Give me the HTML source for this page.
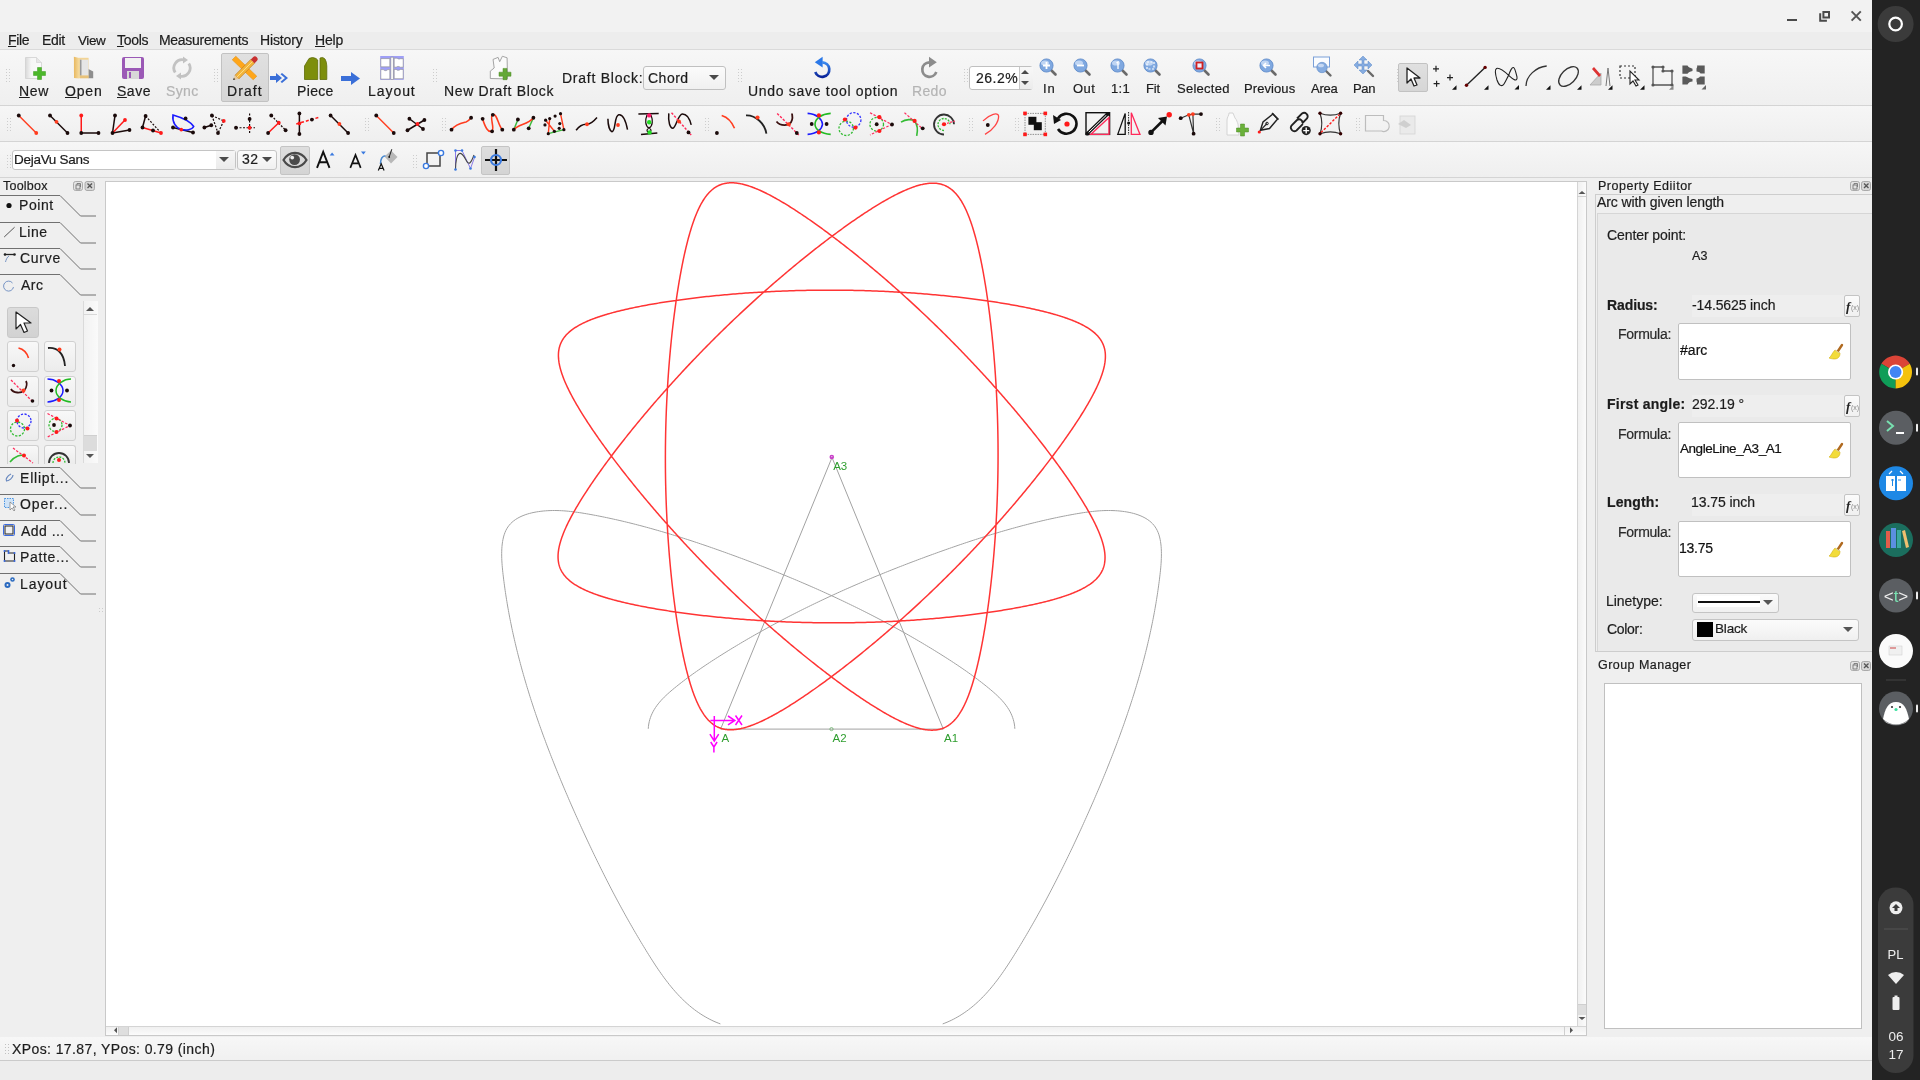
<!DOCTYPE html><html><head><meta charset="utf-8"><style>html,body{margin:0;padding:0}body{width:1920px;height:1080px;overflow:hidden;position:relative;background:#efefef;font-family:"Liberation Sans",sans-serif;-webkit-text-stroke:0.2px currentColor}div{will-change:transform}</style></head><body>
<div style="position:absolute;left:0px;top:0px;width:1872px;height:32px;background:#f2f2f2"></div>
<div style="position:absolute;left:0px;top:32px;width:1872px;height:17px;background:#ededed"></div>
<div style="position:absolute;left:1872px;top:0px;width:48px;height:1080px;background:#232323"></div>
<svg style="position:absolute;left:1770px;top:0px;overflow:visible" width="100" height="36" viewBox="0 0 100 36"><path d="M17 20h10" stroke="#4a4a4a" stroke-width="2"/><path d="M53.4 11.9h5.6v5.6h-5.6z" fill="none" stroke="#4a4a4a" stroke-width="2"/><path d="M50.2 13.3v7.4h6.7" fill="none" stroke="#4a4a4a" stroke-width="2"/><path d="M81.6 11.4l9.2 9.2M90.8 11.4l-9.2 9.2" stroke="#555" stroke-width="2"/></svg>
<div style="position:absolute;left:7.97px;top:33.15px;font-size:14px;line-height:14px;color:#1c1c1c;font-weight:normal;letter-spacing:-0.358px;white-space:nowrap;"><u>F</u>ile</div>
<div style="position:absolute;left:41.58px;top:33.15px;font-size:14px;line-height:14px;color:#1c1c1c;font-weight:normal;letter-spacing:-0.300px;white-space:nowrap;">Edit</div>
<div style="position:absolute;left:78.00px;top:33.57px;font-size:13.5px;line-height:13.5px;color:#1c1c1c;font-weight:normal;letter-spacing:-0.433px;white-space:nowrap;">View</div>
<div style="position:absolute;left:117.15px;top:33.15px;font-size:14px;line-height:14px;color:#1c1c1c;font-weight:normal;letter-spacing:-0.275px;white-space:nowrap;"><u>T</u>ools</div>
<div style="position:absolute;left:159.28px;top:33.15px;font-size:14px;line-height:14px;color:#1c1c1c;font-weight:normal;letter-spacing:-0.291px;white-space:nowrap;">Measurements</div>
<div style="position:absolute;left:260.18px;top:33.15px;font-size:14px;line-height:14px;color:#1c1c1c;font-weight:normal;letter-spacing:-0.133px;white-space:nowrap;">History</div>
<div style="position:absolute;left:315.38px;top:33.15px;font-size:14px;line-height:14px;color:#1c1c1c;font-weight:normal;letter-spacing:-0.208px;white-space:nowrap;"><u>H</u>elp</div>
<div style="position:absolute;left:0px;top:49px;width:1872px;height:1px;background:#dadada"></div>
<div style="position:absolute;left:0px;top:50px;width:1872px;height:56px;background:linear-gradient(#f7f7f7,#efefef)"></div>
<div style="position:absolute;left:0px;top:105px;width:1872px;height:1px;background:#d4d4d4"></div>
<div style="position:absolute;left:0px;top:106px;width:1872px;height:35px;background:linear-gradient(#f6f6f6,#efefef)"></div>
<div style="position:absolute;left:0px;top:141px;width:1872px;height:1px;background:#d4d4d4"></div>
<div style="position:absolute;left:0px;top:142px;width:1872px;height:35px;background:linear-gradient(#f6f6f6,#efefef)"></div>
<div style="position:absolute;left:0px;top:177px;width:1872px;height:1px;background:#d4d4d4"></div>
<div style="position:absolute;left:5px;top:68px;width:6px;height:16px;background-image:radial-gradient(#cdcdcd 0.75px,transparent 0.9px);background-size:3px 3px"></div>
<svg style="position:absolute;left:22px;top:56px;overflow:visible" width="24" height="24" viewBox="0 0 24 24"><defs><linearGradient id="pg" x1="0" x2="1"><stop offset="0" stop-color="#d8d8d8"/><stop offset="0.35" stop-color="#f6f6f6"/><stop offset="1" stop-color="#fafafa"/></linearGradient></defs><path d="M3.5 1.5h11l5 5v16h-16z" fill="url(#pg)" stroke="#d0d0d0" stroke-width="0.8"/><path d="M14.5 1.5v5h5" fill="#e6e6e6" stroke="#cfcfcf" stroke-width="0.6"/><path d="M15.5 11.5h4v4h4v4h-4v4h-4v-4h-4v-4h4z" fill="#4cb82a" stroke="#3a9a1c" stroke-width="0.5"/></svg>
<div style="position:absolute;left:19.27px;top:84.15px;font-size:14px;line-height:14px;color:#1c1c1c;font-weight:normal;letter-spacing:0.613px;white-space:nowrap;"><u>N</u>ew</div>
<svg style="position:absolute;left:71px;top:56px;overflow:visible" width="24" height="24" viewBox="0 0 24 24"><defs><linearGradient id="fo" x1="0" x2="1"><stop offset="0" stop-color="#e8b860"/><stop offset="1" stop-color="#f6dca0"/></linearGradient></defs><path d="M8 1.8h9.6v20.4H8z" fill="#f2d496"/><path d="M17.4 13l4.8 2.6v6.6h-4.8z" fill="#8e8e8e"/><rect x="8.9" y="3.7" width="8.5" height="16" fill="#e6e6e6"/><rect x="8.9" y="3.7" width="1.6" height="16" fill="#9a9a9a"/><path d="M9 19.5h8.6v2.7H9z" fill="#e8c27a"/><path d="M2.9 0.7L8.3 2v20.5L3 22z" fill="url(#fo)"/></svg>
<div style="position:absolute;left:64.58px;top:84.15px;font-size:14px;line-height:14px;color:#1c1c1c;font-weight:normal;letter-spacing:0.817px;white-space:nowrap;"><u>O</u>pen</div>
<svg style="position:absolute;left:121px;top:56px;overflow:visible" width="24" height="24" viewBox="0 0 24 24"><rect x="1" y="1" width="22" height="22" rx="2" fill="#9b59b6"/><rect x="4" y="2" width="16" height="10" fill="#f2f2f2"/><rect x="6" y="15" width="12" height="8" fill="#d8d8d8"/><rect x="8" y="16" width="2" height="6" fill="#9b59b6"/></svg>
<div style="position:absolute;left:116.67px;top:84.15px;font-size:14px;line-height:14px;color:#1c1c1c;font-weight:normal;letter-spacing:0.517px;white-space:nowrap;"><u>S</u>ave</div>
<svg style="position:absolute;left:170px;top:56px;overflow:visible" width="24" height="24" viewBox="0 0 24 24"><path d="M5.2 16.5A8.3 8.3 0 0 1 14 3.9" fill="none" stroke="#c2c2c2" stroke-width="2.8"/><path d="M18.8 7.5A8.3 8.3 0 0 1 10 20.1" fill="none" stroke="#c2c2c2" stroke-width="2.8"/><path d="M13 0.5l5 3.6-5 3.4z" fill="#c2c2c2"/><path d="M11 23.5l-5-3.6 5-3.4z" fill="#c2c2c2"/></svg>
<div style="position:absolute;left:165.62px;top:84.15px;font-size:14px;line-height:14px;color:#b4b4b4;font-weight:normal;letter-spacing:0.375px;white-space:nowrap;">Sync</div>
<div style="position:absolute;left:213px;top:68px;width:6px;height:16px;background-image:radial-gradient(#cdcdcd 0.75px,transparent 0.9px);background-size:3px 3px"></div>
<div style="position:absolute;left:221px;top:53px;width:48px;height:49px;background:linear-gradient(#e0e0e0,#d6d6d6);border:1px solid #c2c2c2;border-radius:2px;box-sizing:border-box"></div>
<svg style="position:absolute;left:233px;top:56px;overflow:visible" width="24" height="24" viewBox="0 0 24 24"><path d="M2.8 0.2L23.8 20.2L20.2 23.8L-0.8 3.8Z" fill="#ffa61a" stroke="#e08a00" stroke-width="0.5"/><path d="M2 19.2L17.8 3.4L21.6 7.2L5.8 23Z" fill="#f2b43a" stroke="#b8741a" stroke-width="0.6"/><path d="M3.9 21.1L19.7 5.3" stroke="#ffe08a" stroke-width="0.9"/><path d="M17.8 3.4l2.2-2.2a2.6 2.6 0 0 1 3.8 3.8l-2.2 2.2z" fill="#c83030"/><path d="M2 19.2L0 24l5.8-1z" fill="#e8c898"/><path d="M0.9 21.8L0 24l2.3-0.5z" fill="#333"/></svg>
<div style="position:absolute;left:227.38px;top:84.15px;font-size:14px;line-height:14px;color:#1c1c1c;font-weight:normal;letter-spacing:1.062px;white-space:nowrap;">Draft</div>
<svg style="position:absolute;left:270px;top:73px;overflow:visible" width="20" height="10" viewBox="0 0 20 10"><path d="M0 3h6v-3l6 5-6 5v-3h-6z" fill="#3a6fd8"/><path d="M12 0l6 5-6 5 -1.5-1.3 4.5-3.7-4.5-3.7z" fill="#3a6fd8"/></svg>
<svg style="position:absolute;left:303px;top:56px;overflow:visible" width="24" height="24" viewBox="0 0 24 24"><path d="M1.5 23.5V10L6 2.5Q9.5 0.5 13 2.5L14.7 4V23.5Z" fill="#7d8e0c" stroke="#5f6c08" stroke-width="0.8"/><path d="M17 23.5V2Q20 0.5 22 3Q23.8 6 23.8 10V23.5Z" fill="#7d8e0c" stroke="#5f6c08" stroke-width="0.8"/></svg>
<div style="position:absolute;left:296.88px;top:84.15px;font-size:14px;line-height:14px;color:#1c1c1c;font-weight:normal;letter-spacing:0.344px;white-space:nowrap;">Piece</div>
<svg style="position:absolute;left:341px;top:72px;overflow:visible" width="20" height="13" viewBox="0 0 20 13"><path d="M0 4h10v-4l9 6.5-9 6.5v-4h-10z" fill="#3a6fd8"/></svg>
<svg style="position:absolute;left:380px;top:56px;overflow:visible" width="24" height="24" viewBox="0 0 24 24"><rect x="0.2" y="0" width="23.6" height="23.8" fill="#9f9ff6"/><g fill="#fff" stroke="#8a8a8a" stroke-width="0.6"><path d="M0.8 2.6h9v8.2h-9z"/><path d="M0.8 13.6h2.5c1 1.4 3.5 1.4 4.5 0h2v9.5h-9z"/><path d="M10.8 1.2h2.6v22.3h-2.6z"/><path d="M14.2 2.2h3c0.8 1 2.5 1 3 0.5h3v8.5h-3c-1-1-3-1-4 0h-2z"/><path d="M14.2 13.4h2c1 1.2 3 1.2 4 0h3v9.3h-9z"/></g></svg>
<div style="position:absolute;left:368.27px;top:84.15px;font-size:14px;line-height:14px;color:#1c1c1c;font-weight:normal;letter-spacing:0.945px;white-space:nowrap;">Layout</div>
<div style="position:absolute;left:432px;top:68px;width:6px;height:16px;background-image:radial-gradient(#cdcdcd 0.75px,transparent 0.9px);background-size:3px 3px"></div>
<svg style="position:absolute;left:489px;top:56px;overflow:visible" width="24" height="24" viewBox="0 0 24 24"><path d="M4.05 3.4L9.1 1.4L10.7 5.7L13.4 0.25L18.1 1.8L18.5 22.9L1.3 22.5L1.3 15.1L5.2 12Z" fill="#fbfbfb" stroke="#9a9a9a" stroke-width="0.9" stroke-linejoin="round"/><path d="M14 12.4h4v3.8h4v4h-4v3.5h-4v-3.5h-4v-4h4z" fill="#64a838" stroke="#4a8a20" stroke-width="0.5"/></svg>
<div style="position:absolute;left:444.18px;top:84.15px;font-size:14px;line-height:14px;color:#1c1c1c;font-weight:normal;letter-spacing:0.654px;white-space:nowrap;">New Draft Block</div>
<div style="position:absolute;left:561.88px;top:71.15px;font-size:14px;line-height:14px;color:#1c1c1c;font-weight:normal;letter-spacing:0.755px;white-space:nowrap;">Draft Block:</div>
<div style="position:absolute;left:643px;top:66px;width:83px;height:24px;background:linear-gradient(#fbfbfb,#f0f0f0);border:1px solid #c0c0c0;border-radius:3px;box-sizing:border-box"></div>
<div style="position:absolute;left:648.00px;top:71.15px;font-size:14px;line-height:14px;color:#1c1c1c;font-weight:normal;letter-spacing:0.500px;white-space:nowrap;">Chord</div>
<svg style="position:absolute;left:709px;top:75px;overflow:visible" width="10" height="6" viewBox="0 0 10 6"><path d="M0 0h10l-5 5z" fill="#4a4a4a"/></svg>
<div style="position:absolute;left:737px;top:68px;width:6px;height:16px;background-image:radial-gradient(#cdcdcd 0.75px,transparent 0.9px);background-size:3px 3px"></div>
<svg style="position:absolute;left:810px;top:56px;overflow:visible" width="24" height="24" viewBox="0 0 24 24"><defs><linearGradient id="ug" x1="0" y1="0" x2="0" y2="1"><stop offset="0" stop-color="#3a8af0"/><stop offset="1" stop-color="#0a249a"/></linearGradient></defs><path d="M12.3 6.4A7.2 7.2 0 1 1 5.3 16" fill="none" stroke="url(#ug)" stroke-width="2.7"/><path d="M4.8 6.2L12.6 0.8V11.6Z" fill="#2a78e8"/></svg>
<div style="position:absolute;left:747.90px;top:84.15px;font-size:14px;line-height:14px;color:#1c1c1c;font-weight:normal;letter-spacing:0.700px;white-space:nowrap;">Undo save tool option</div>
<svg style="position:absolute;left:917px;top:56px;overflow:visible" width="24" height="24" viewBox="0 0 24 24"><path d="M12.3 6.4A7.2 7.2 0 1 0 19.3 16" fill="none" stroke="#8c8c8c" stroke-width="2.7"/><path d="M19.8 6.2L12 0.8V11.6Z" fill="#8c8c8c"/></svg>
<div style="position:absolute;left:912.48px;top:84.15px;font-size:14px;line-height:14px;color:#b4b4b4;font-weight:normal;letter-spacing:0.317px;white-space:nowrap;">Redo</div>
<div style="position:absolute;left:963px;top:68px;width:6px;height:16px;background-image:radial-gradient(#cdcdcd 0.75px,transparent 0.9px);background-size:3px 3px"></div>
<div style="position:absolute;left:969px;top:66px;width:64px;height:24px;background:#fff;border:1px solid #c0c0c0;border-radius:3px;box-sizing:border-box"></div>
<div style="position:absolute;left:1019px;top:67px;width:13px;height:22px;background:linear-gradient(#f8f8f8,#ececec);border-left:1px solid #c8c8c8"></div>
<svg style="position:absolute;left:1020px;top:69px;overflow:visible" width="10" height="18" viewBox="0 0 10 18"><path d="M1 5l4-4 4 4z M1 12l4 4 4-4z" fill="#4a4a4a"/></svg>
<div style="position:absolute;left:976.00px;top:71.15px;font-size:14px;line-height:14px;color:#1c1c1c;font-weight:normal;letter-spacing:0.500px;white-space:nowrap;">26.2%</div>
<svg style="position:absolute;left:1039px;top:57.5px;overflow:visible" width="20" height="20" viewBox="0 0 20 20"><path d="M10.5 10.5l6 6" stroke="#6a6a6a" stroke-width="2.6" stroke-linecap="round"/><circle cx="7.5" cy="7.5" r="6.6" fill="#7fa8e0" stroke="#5a88c8" stroke-width="0.8"/><ellipse cx="6" cy="5" rx="4" ry="2.6" fill="#cfe0f7" opacity="0.8"/><path d="M4 7.5h7M7.5 4v7" stroke="#fff" stroke-width="1.8"/></svg>
<div style="position:absolute;left:1043.47px;top:82.00px;font-size:13px;line-height:13px;color:#1c1c1c;font-weight:normal;letter-spacing:0.925px;white-space:nowrap;">In</div>
<svg style="position:absolute;left:1073px;top:57.5px;overflow:visible" width="20" height="20" viewBox="0 0 20 20"><path d="M10.5 10.5l6 6" stroke="#6a6a6a" stroke-width="2.6" stroke-linecap="round"/><circle cx="7.5" cy="7.5" r="6.6" fill="#7fa8e0" stroke="#5a88c8" stroke-width="0.8"/><ellipse cx="6" cy="5" rx="4" ry="2.6" fill="#cfe0f7" opacity="0.8"/><path d="M4 7.5h7" stroke="#fff" stroke-width="1.8"/></svg>
<div style="position:absolute;left:1072.88px;top:82.00px;font-size:13px;line-height:13px;color:#1c1c1c;font-weight:normal;letter-spacing:0.475px;white-space:nowrap;">Out</div>
<svg style="position:absolute;left:1110px;top:57.5px;overflow:visible" width="20" height="20" viewBox="0 0 20 20"><path d="M10.5 10.5l6 6" stroke="#6a6a6a" stroke-width="2.6" stroke-linecap="round"/><circle cx="7.5" cy="7.5" r="6.6" fill="#7fa8e0" stroke="#5a88c8" stroke-width="0.8"/><ellipse cx="6" cy="5" rx="4" ry="2.6" fill="#cfe0f7" opacity="0.8"/><path d="M6.5 5l1.5-1v7" stroke="#fff" stroke-width="1.3" fill="none"/></svg>
<div style="position:absolute;left:1110.60px;top:82.00px;font-size:13px;line-height:13px;color:#1c1c1c;font-weight:normal;letter-spacing:0.350px;white-space:nowrap;">1:1</div>
<svg style="position:absolute;left:1143px;top:57.5px;overflow:visible" width="20" height="20" viewBox="0 0 20 20"><path d="M10.5 10.5l6 6" stroke="#6a6a6a" stroke-width="2.6" stroke-linecap="round"/><circle cx="7.5" cy="7.5" r="6.6" fill="#7fa8e0" stroke="#5a88c8" stroke-width="0.8"/><ellipse cx="6" cy="5" rx="4" ry="2.6" fill="#cfe0f7" opacity="0.8"/><rect x="4" y="4" width="7" height="7" fill="none" stroke="#fff" stroke-width="1.2" stroke-dasharray="2 1.5"/></svg>
<div style="position:absolute;left:1145.60px;top:82.00px;font-size:13px;line-height:13px;color:#1c1c1c;font-weight:normal;letter-spacing:-0.138px;white-space:nowrap;">Fit</div>
<svg style="position:absolute;left:1192px;top:57.5px;overflow:visible" width="20" height="20" viewBox="0 0 20 20"><path d="M10.5 10.5l6 6" stroke="#6a6a6a" stroke-width="2.6" stroke-linecap="round"/><circle cx="7.5" cy="7.5" r="6.6" fill="#7fa8e0" stroke="#5a88c8" stroke-width="0.8"/><ellipse cx="6" cy="5" rx="4" ry="2.6" fill="#cfe0f7" opacity="0.8"/><rect x="4.5" y="4.5" width="6" height="6" fill="#eef" stroke="#d02020" stroke-width="1.8"/></svg>
<div style="position:absolute;left:1176.58px;top:82.00px;font-size:13px;line-height:13px;color:#1c1c1c;font-weight:normal;letter-spacing:0.268px;white-space:nowrap;">Selected</div>
<svg style="position:absolute;left:1259px;top:57.5px;overflow:visible" width="20" height="20" viewBox="0 0 20 20"><path d="M10.5 10.5l6 6" stroke="#6a6a6a" stroke-width="2.6" stroke-linecap="round"/><circle cx="7.5" cy="7.5" r="6.6" fill="#7fa8e0" stroke="#5a88c8" stroke-width="0.8"/><ellipse cx="6" cy="5" rx="4" ry="2.6" fill="#cfe0f7" opacity="0.8"/><path d="M11 7.5H4.5m2.5-2.5l-2.5 2.5 2.5 2.5" fill="none" stroke="#fff" stroke-width="1.6"/></svg>
<div style="position:absolute;left:1243.70px;top:82.00px;font-size:13px;line-height:13px;color:#1c1c1c;font-weight:normal;letter-spacing:0.082px;white-space:nowrap;">Previous</div>
<svg style="position:absolute;left:1310px;top:56px;overflow:visible" width="26" height="24" viewBox="0 0 26 24"><rect x="3.5" y="1" width="16" height="10" fill="#fafcff" stroke="#7aa0d8" stroke-width="1"/><path d="M16 15l4.5 4.5" stroke="#6a6a6a" stroke-width="2.4" stroke-linecap="round"/><circle cx="12" cy="11.5" r="5.2" fill="#86ace0" stroke="#5a88c8" stroke-width="0.6"/><ellipse cx="11" cy="9.5" rx="3" ry="1.8" fill="#d6e4f7" opacity="0.8"/></svg>
<div style="position:absolute;left:1310.70px;top:82.00px;font-size:13px;line-height:13px;color:#1c1c1c;font-weight:normal;letter-spacing:-0.233px;white-space:nowrap;">Area</div>
<svg style="position:absolute;left:1352px;top:55px;overflow:visible" width="24" height="24" viewBox="0 0 24 24"><path d="M16 16l5 5" stroke="#6a6a6a" stroke-width="2.4" stroke-linecap="round"/><path d="M11 1l4 4h-3v4h4V6l4 4-4 4v-3h-4v4h3l-4 4-4-4h3v-4H6v3l-4-4 4-4v3h4V5H7z" fill="#86ace0" stroke="#5a88c8" stroke-width="0.5"/></svg>
<div style="position:absolute;left:1353.40px;top:82.00px;font-size:13px;line-height:13px;color:#1c1c1c;font-weight:normal;letter-spacing:-0.325px;white-space:nowrap;">Pan</div>
<div style="position:absolute;left:1396px;top:68px;width:6px;height:16px;background-image:radial-gradient(#cdcdcd 0.75px,transparent 0.9px);background-size:3px 3px"></div>
<div style="position:absolute;left:1398px;top:63px;width:30px;height:29px;background:linear-gradient(#e0e0e0,#d6d6d6);border:1px solid #c2c2c2;border-radius:2px;box-sizing:border-box"></div>
<svg style="position:absolute;left:1403px;top:66px;overflow:visible" width="20" height="22" viewBox="0 0 20 22"><path d="M4 2v15l4-4 3 7 3-1-3-7h6z" fill="#fff" stroke="#222" stroke-width="1.3" stroke-linejoin="round"/></svg>
<svg style="position:absolute;left:0px;top:0px;overflow:visible" width="1872" height="100" viewBox="0 0 1872 100"><path d="M1433 68.8h6M1436 65.8v6 M1447 77.6h6M1450 74.6v6 M1433.6 83.7h6M1436.6 80.7v6" stroke="#222" stroke-width="1.2"/><path d="M1452 89.8h4.5v-4.5z" fill="#111"/><path d="M1466.5 85.2L1485.1 67.4" stroke="#222" stroke-width="1.4"/><circle cx="1466.5" cy="85.2" r="1.7" fill="#600"/><circle cx="1485.1" cy="67.4" r="1.7" fill="#600"/><path d="M1484 89.8h4.5v-4.5z" fill="#111"/><path d="M1508.7 75.4C1504 71 1499 67.5 1496.5 68.5C1494 70 1495.5 75 1497 80C1499 86 1502 87 1504 84C1506 81 1507 78 1508.7 75.4C1510 71 1512 67 1513.5 67.5C1515 68 1516 73 1517 77C1517.5 80 1515.5 80.5 1514 79.5C1512 78.5 1510.5 77 1508.7 75.4Z" fill="none" stroke="#222" stroke-width="1.1"/><path d="M1514.5 89.6h4.5v-4.5z" fill="#111"/><path d="M1526 86c0-10 10-19 20.7-20" fill="none" stroke="#333" stroke-width="1.3"/><path d="M1546 89.8h4.5v-4.5z" fill="#111"/><ellipse cx="1568.5" cy="76.5" rx="12" ry="7" transform="rotate(-45 1568.5 76.5)" fill="none" stroke="#333" stroke-width="1.3"/><path d="M1577 89.8h4.5v-4.5z" fill="#111"/><path d="M1590 85l11-12v12z" fill="#ccc" stroke="#aaa" stroke-width="0.8"/><path d="M1594 67l7 8-2 2-7-8z" fill="#d33"/><path d="M1606 86l2-18 2 18" fill="none" stroke="#777" stroke-width="1"/><path d="M1608 89.8h4.5v-4.5z" fill="#111"/><rect x="1620" y="66" width="15" height="12" fill="none" stroke="#333" stroke-width="1.2" stroke-dasharray="2 2"/><path d="M1630 71v13l3-3 3 5 2-1-3-5h4z" fill="#fff" stroke="#222" stroke-width="1.1"/><path d="M1640 89.8h4.5v-4.5z" fill="#111"/><path d="M1653 67v18h19v-14h-9v-4z" fill="none" stroke="#555" stroke-width="1.3"/><circle cx="1653" cy="67" r="1.6" fill="#555"/><circle cx="1663" cy="67" r="1.6" fill="#555"/><circle cx="1663" cy="71" r="1.6" fill="#555"/><circle cx="1672" cy="71" r="1.6" fill="#555"/><circle cx="1672" cy="85" r="1.6" fill="#555"/><circle cx="1653" cy="85" r="1.6" fill="#555"/><path d="M1669 89.8h4.5v-4.5z" fill="#888"/><path d="M1682.4 65.6H1687.5C1688.5 67.5 1690 67.8 1692.5 68.8V71C1690 71.5 1688.5 72 1687.5 73.8H1682.4Z M1697 65.6H1704.7V73.6H1700.5C1699.5 72 1698.5 71.8 1696.5 71.6V68.6C1697 67.5 1697.5 66.5 1697 65.6Z M1682.4 76.8C1684 76.3 1686.5 76.3 1687.5 77.3C1688.5 78.3 1690 78.5 1692.5 79V81.5C1690 81.8 1688.5 82.3 1687.5 84.6H1682.4Z M1700 76.6H1704.7V84.6H1696.8C1697.2 83.5 1697 82.5 1696.5 81.6V78.6C1698 78.3 1699.3 77.8 1700 76.6Z" fill="#5a5a5a"/><path d="M1701.5 89.6h4.5v-4.5z" fill="#666"/></svg>
<div style="position:absolute;left:6px;top:117px;width:6px;height:14px;background-image:radial-gradient(#cdcdcd 0.75px,transparent 0.9px);background-size:3px 3px"></div>
<div style="position:absolute;left:363.5px;top:117px;width:6px;height:14px;background-image:radial-gradient(#cdcdcd 0.75px,transparent 0.9px);background-size:3px 3px"></div>
<div style="position:absolute;left:440.5px;top:117px;width:6px;height:14px;background-image:radial-gradient(#cdcdcd 0.75px,transparent 0.9px);background-size:3px 3px"></div>
<div style="position:absolute;left:704px;top:117px;width:6px;height:14px;background-image:radial-gradient(#cdcdcd 0.75px,transparent 0.9px);background-size:3px 3px"></div>
<div style="position:absolute;left:968px;top:117px;width:6px;height:14px;background-image:radial-gradient(#cdcdcd 0.75px,transparent 0.9px);background-size:3px 3px"></div>
<div style="position:absolute;left:1014px;top:117px;width:6px;height:14px;background-image:radial-gradient(#cdcdcd 0.75px,transparent 0.9px);background-size:3px 3px"></div>
<div style="position:absolute;left:1214.5px;top:117px;width:6px;height:14px;background-image:radial-gradient(#cdcdcd 0.75px,transparent 0.9px);background-size:3px 3px"></div>
<div style="position:absolute;left:1355px;top:117px;width:6px;height:14px;background-image:radial-gradient(#cdcdcd 0.75px,transparent 0.9px);background-size:3px 3px"></div>
<svg style="position:absolute;left:0px;top:0px;overflow:visible" width="1872" height="200" viewBox="0 0 1872 200"><path d="M18.75 115.5L36.25 133" stroke="#ff3c1e" stroke-width="1.5"/><circle cx="18.75" cy="115.5" r="1.9" fill="#1a0a0a"/><circle cx="36.25" cy="133" r="1.9" fill="#ff3c1e"/><path d="M50 115.5L67.5 133" stroke="#1a0a0a" stroke-width="1.5"/><circle cx="50" cy="115.5" r="1.9" fill="#1a0a0a"/><circle cx="67.5" cy="133" r="1.9" fill="#1a0a0a"/><circle cx="56.5" cy="121.8" r="1.9" fill="#ff3c1e"/><path d="M81.25 115.5L81.25 133" stroke="#ff1a1a" stroke-width="1.5"/><path d="M81.25 133L98.5 133" stroke="#1a0a0a" stroke-width="1.5"/><circle cx="81.25" cy="115.5" r="1.9" fill="#ff1a1a"/><circle cx="81.25" cy="133" r="1.9" fill="#1a0a0a"/><circle cx="98.5" cy="133" r="1.9" fill="#1a0a0a"/><path d="M112.5 133L115 115.5" stroke="#1a0a0a" stroke-width="1.5"/><path d="M112.5 133L129.5 130" stroke="#1a0a0a" stroke-width="1.5"/><path d="M112.5 133L125 120" stroke="#ff1a1a" stroke-width="1.5"/><circle cx="115" cy="115.5" r="1.9" fill="#1a0a0a"/><circle cx="125" cy="120" r="1.9" fill="#ff1a1a"/><circle cx="129.5" cy="130" r="1.9" fill="#1a0a0a"/><circle cx="112.5" cy="133" r="1.9" fill="#1a0a0a"/><path d="M145.6 116L142.5 127.5" stroke="#1a0a0a" stroke-width="1.5"/><path d="M145.6 116L161 133" stroke="#1a0a0a" stroke-width="1.2" stroke-dasharray="2 1.5"/><path d="M142.5 127.5L161 133" stroke="#ff1a1a" stroke-width="1.5"/><circle cx="145.6" cy="116" r="1.9" fill="#1a0a0a"/><circle cx="142.5" cy="127.5" r="1.9" fill="#1a0a0a"/><circle cx="153" cy="130.5" r="1.9" fill="#1a0a0a"/><circle cx="161" cy="133" r="1.9" fill="#ff1a1a"/><path d="M173 127.5L193 132.5" stroke="#1a0a0a" stroke-width="1.5"/><path d="M173 115C180 117 190 121 193.7 126.5C192 130 186 130.5 181.3 129.6C176 128 172 122 173 115Z" stroke="#1a1aff" stroke-width="1.6" fill="none"/><circle cx="185.6" cy="118.4" r="1.9" fill="#1a0a0a"/><circle cx="173" cy="127.5" r="1.9" fill="#1a0a0a"/><circle cx="181.25" cy="129.6" r="1.9" fill="#ff1a1a"/><circle cx="193" cy="132.5" r="1.9" fill="#1a0a0a"/><path d="M204.4 127.5L211.25 125.25" stroke="#1a0a0a" stroke-width="1.5"/><path d="M211.9 115.5L223.75 120.9" stroke="#1a0a0a" stroke-width="1.2" stroke-dasharray="2 1.5"/><path d="M223.75 120.9L218 133" stroke="#1a0a0a" stroke-width="1.2" stroke-dasharray="2 1.5"/><path d="M211.9 115.5L218 133" stroke="#1a0a0a" stroke-width="1.2" stroke-dasharray="2 1.5"/><circle cx="211.9" cy="115.5" r="1.9" fill="#1a0a0a"/><circle cx="223.75" cy="120.9" r="1.9" fill="#ff1a1a"/><circle cx="218" cy="133" r="1.9" fill="#1a0a0a"/><circle cx="211.25" cy="125.25" r="1.9" fill="#1a0a0a"/><circle cx="204.4" cy="127.5" r="1.9" fill="#1a0a0a"/><path d="M236 127.75L255 127.75" stroke="#1a0a0a" stroke-width="1.2" stroke-dasharray="2 1.5"/><path d="M249.6 113.4L249.6 133.4" stroke="#1a0a0a" stroke-width="1.2" stroke-dasharray="2 1.5"/><circle cx="236" cy="127.75" r="1.9" fill="#1a0a0a"/><circle cx="249.6" cy="119" r="1.9" fill="#1a0a0a"/><circle cx="249.6" cy="127.75" r="1.9" fill="#ff1a1a"/><path d="M271.25 115.5L285.6 130.25" stroke="#1a0a0a" stroke-width="1.2" stroke-dasharray="2 1.5"/><path d="M268.1 133L278.75 122.75" stroke="#ff1a1a" stroke-width="1.5"/><circle cx="271.25" cy="115.5" r="1.9" fill="#1a0a0a"/><circle cx="285.6" cy="130.25" r="1.9" fill="#1a0a0a"/><circle cx="278.75" cy="122.75" r="1.9" fill="#ff1a1a"/><circle cx="268.1" cy="133" r="1.9" fill="#1a0a0a"/><path d="M299.4 113.4L299.4 134" stroke="#1a0a0a" stroke-width="1.5"/><path d="M296.25 124L320 117" stroke="#ff1a1a" stroke-width="1.5" stroke-dasharray="3 2"/><circle cx="299.4" cy="113.4" r="1.9" fill="#1a0a0a"/><circle cx="299.4" cy="134" r="1.9" fill="#1a0a0a"/><circle cx="299.4" cy="123.4" r="1.9" fill="#ff1a1a"/><circle cx="311.9" cy="119.6" r="1.9" fill="#1a0a0a"/><path d="M330.6 115.5L348.1 133" stroke="#1a0a0a" stroke-width="1.5"/><circle cx="330.6" cy="115.5" r="1.9" fill="#1a0a0a"/><circle cx="348.1" cy="133" r="1.9" fill="#1a0a0a"/><circle cx="339.4" cy="124" r="1.9" fill="#ff3c1e"/><path d="M376.25 115.5L393.75 133" stroke="#ff3c1e" stroke-width="1.5"/><circle cx="376.25" cy="115.5" r="1.9" fill="#1a0a0a"/><circle cx="393.75" cy="133" r="1.9" fill="#1a0a0a"/><path d="M409.4 118.75L423 129" stroke="#1a0a0a" stroke-width="1.5"/><path d="M407.5 130.25L424.4 120" stroke="#1a0a0a" stroke-width="1.5"/><circle cx="409.4" cy="118.75" r="1.9" fill="#1a0a0a"/><circle cx="423" cy="129" r="1.9" fill="#1a0a0a"/><circle cx="407.5" cy="130.25" r="1.9" fill="#1a0a0a"/><circle cx="424.4" cy="120" r="1.9" fill="#1a0a0a"/><circle cx="417.5" cy="124" r="1.9" fill="#ff1a1a"/><path d="M451.5 129.7C456 124 462 123 466 122C469 121 470 119 471.1 117.75" stroke="#ff3c1e" stroke-width="1.6" fill="none"/><circle cx="451.5" cy="129.7" r="1.9" fill="#1a0a0a"/><circle cx="471.1" cy="117.75" r="1.9" fill="#1a0a0a"/><path d="M482.6 118.8C485 127 488 133 492 131C495 128 489 116 492.8 114.8C497 113 498 125 502.3 129.7" stroke="#ff3c1e" stroke-width="1.6" fill="none"/><circle cx="482.65" cy="118.8" r="1.9" fill="#1a0a0a"/><circle cx="492.8" cy="114.8" r="1.9" fill="#1a0a0a"/><circle cx="492.1" cy="131.3" r="1.9" fill="#1a0a0a"/><circle cx="502.3" cy="129.7" r="1.9" fill="#1a0a0a"/><path d="M513.8 129.7L517.9 119.5" stroke="#3cb83c" stroke-width="1.5"/><path d="M528.7 128.3L533.4 117.75" stroke="#3cb83c" stroke-width="1.5"/><path d="M513.8 129.7C518 124 528 125 533.4 117.75" stroke="#ff3c1e" stroke-width="1.6" fill="none"/><circle cx="517.9" cy="119.5" r="1.9" fill="#1a0a0a"/><circle cx="513.8" cy="129.7" r="1.9" fill="#1a0a0a"/><circle cx="533.4" cy="117.75" r="1.9" fill="#1a0a0a"/><circle cx="528.7" cy="128.3" r="1.9" fill="#1a0a0a"/><path d="M549.7 118.6L548.3 133.7M560.5 113.7L563.9 129.7M545.6 120.2L554.4 131.3" stroke="#ff3c1e" stroke-width="1.4" fill="none"/><path d="M548.3 133.7L563.9 129.7" stroke="#3cb83c" stroke-width="1.2" fill="none"/><circle cx="545.6" cy="120.2" r="1.6" fill="#1a0a0a"/><circle cx="549.7" cy="118.6" r="1.6" fill="#1a0a0a"/><circle cx="555.1" cy="116.1" r="1.6" fill="#1a0a0a"/><circle cx="560.5" cy="113.7" r="1.6" fill="#1a0a0a"/><circle cx="545" cy="124.9" r="1.6" fill="#1a0a0a"/><circle cx="559.8" cy="123.6" r="1.6" fill="#1a0a0a"/><circle cx="559.2" cy="128.3" r="1.6" fill="#1a0a0a"/><circle cx="554.4" cy="131.3" r="1.6" fill="#1a0a0a"/><circle cx="548.3" cy="133.7" r="1.6" fill="#1a0a0a"/><circle cx="563.9" cy="129.7" r="1.6" fill="#1a0a0a"/><path d="M576.1 130.3C580 125 584 124 587 124.25C591 124 594 121 597 117.5" stroke="#1a0a0a" stroke-width="1.5" fill="none"/><circle cx="587" cy="124.25" r="1.9" fill="#ff3c1e"/><path d="M607.9 118.8C608 126 610 131 612 131.7C616 131 614 116 618.7 114.8C623 114 626 122 627.5 129.7" stroke="#1a0a0a" stroke-width="1.5" fill="none"/><circle cx="618" cy="125" r="1.9" fill="#ff3c1e"/><path d="M638.4 114L658.7 113.4" stroke="#1a0a0a" stroke-width="1.5"/><path d="M641 134.4L657.3 133" stroke="#1a0a0a" stroke-width="1.5"/><path d="M647 115C645 120 645 126 649 128C653 130 650 133 648 133M651 115C653 120 653 126 649 128C645 130 648 133 650 133" stroke="#1a0a0a" stroke-width="1.2" fill="none"/><circle cx="649.2" cy="115.4" r="2.2" fill="#ff1a6a"/><circle cx="649.2" cy="122.2" r="2.2" fill="#22dd22"/><circle cx="649.6" cy="132.4" r="2.2" fill="#22dd22"/><path d="M668.8 113.4C668 122 670 128 672.9 128.3C676 128 678 114 682.4 114C687 114 690 120 691.2 124.9" stroke="#1a0a0a" stroke-width="1.5" fill="none"/><path d="M671.5 112.7L691.2 135" stroke="#ff2a5a" stroke-width="1.4" stroke-dasharray="2.5 1.5"/><circle cx="679" cy="121.5" r="1.9" fill="#ff3c1e"/><circle cx="688.5" cy="132.4" r="1.9" fill="#1a0a0a"/><circle cx="716.9" cy="133" r="1.9" fill="#1a0a0a"/><path d="M721.7 115.4C727 117 732 122 734.5 128.3" stroke="#ff3c1e" stroke-width="1.6" fill="none"/><path d="M746 115.4C756 115 765 124 766.4 133.7" stroke="#222" stroke-width="1.8" fill="none"/><circle cx="757.5" cy="117.5" r="2.1" fill="#ff3c1e"/><path d="M776.5 121.5C780 126 790 127 792 120C793 117 792 115 792 113.4" stroke="#3a1010" stroke-width="1.8" fill="none"/><path d="M777.2 113.4L798.8 135" stroke="#ff2a5a" stroke-width="1.4" stroke-dasharray="2.5 1.5"/><circle cx="788.7" cy="124.25" r="2.1" fill="#ff3c1e"/><circle cx="796.8" cy="133" r="1.9" fill="#1a0a0a"/><path d="M807.6 113.4C817 114 822 119 822.5 124.25C822 129 817 134 807.6 134.4" stroke="#1a1aff" stroke-width="1.6" fill="none"/><path d="M830.7 113.4C821 114 815 119 815 124.25C815 129 821 134 830.7 134.4" stroke="#22bb22" stroke-width="1.6" fill="none"/><circle cx="818.9" cy="115.4" r="2.1" fill="#ff1a1a"/><circle cx="818.9" cy="132.4" r="2.1" fill="#ff1a1a"/><circle cx="811.7" cy="124" r="1.9" fill="#1a0a0a"/><circle cx="826.6" cy="124" r="1.9" fill="#1a0a0a"/><circle cx="846.2" cy="128.3" r="7.2" fill="none" stroke="#33bb33" stroke-width="1.3" stroke-dasharray="2.2 1.5"/><circle cx="853.7" cy="119.9" r="7.2" fill="none" stroke="#3333ff" stroke-width="1.3" stroke-dasharray="2.2 1.5"/><circle cx="844.9" cy="119.5" r="2.1" fill="#ff1a1a"/><circle cx="855.5" cy="127.6" r="2.1" fill="#ff1a1a"/><circle cx="876.7" cy="124.25" r="6.8" fill="none" stroke="#33bb33" stroke-width="1.3" stroke-dasharray="2.2 1.5"/><path d="M870 112.7L891.6 124.5L870 135" stroke="#ff2a5a" stroke-width="1.2" fill="none" stroke-dasharray="2.5 1.5"/><circle cx="879.4" cy="117.2" r="2.1" fill="#ff1a1a"/><circle cx="879.4" cy="131" r="2.1" fill="#ff1a1a"/><circle cx="876.7" cy="124.25" r="1.9" fill="#1a0a0a"/><circle cx="892" cy="124.5" r="1.9" fill="#1a0a0a"/><path d="M901 122.2C906 119 912 119 914.6 120.9C917 124 918 130 916.7 135.8" stroke="#33bb33" stroke-width="1.6" fill="none"/><path d="M904.5 112.7L922 128.3" stroke="#ff2a5a" stroke-width="1.2" stroke-dasharray="2.5 1.5"/><circle cx="914.6" cy="120.9" r="2.1" fill="#ff1a1a"/><circle cx="922.7" cy="128.3" r="1.9" fill="#1a0a0a"/><path d="M944 134.5A10 10 0 1 1 954 124.25" stroke="#333" stroke-width="1.8" fill="none"/><path d="M944 130.5A6 6 0 1 1 950 124.25" stroke="#33bb33" stroke-width="1.3" fill="none" stroke-dasharray="2 1.2"/><path d="M944 124.25L955 121" stroke="#ff2a5a" stroke-width="1.2" stroke-dasharray="2 1.2"/><circle cx="944" cy="124.25" r="2.1" fill="#ff1a1a"/><path d="M985 134.4C993 130 999 122 998.6 116C998 112 990 114 983 120.9" stroke="#ff4444" stroke-width="1.3" fill="none"/><circle cx="987.8" cy="125" r="1.9" fill="#1a0a0a"/><rect x="1025" y="113.4" width="20.3" height="21" fill="none" stroke="#777" stroke-width="0.8" stroke-dasharray="1.5 1"/><rect x="1023.2" y="111.60000000000001" width="3.6" height="3.6" fill="#ff1a1a"/><rect x="1043.5" y="111.60000000000001" width="3.6" height="3.6" fill="#ff1a1a"/><rect x="1023.2" y="132.6" width="3.6" height="3.6" fill="#ff1a1a"/><rect x="1043.5" y="132.6" width="3.6" height="3.6" fill="#ff1a1a"/><rect x="1028.4" y="116.8" width="8" height="8" fill="#111"/><rect x="1033.8" y="122.2" width="8" height="8" fill="#111"/><path d="M1058 118.5A10 10 0 1 1 1058 129" stroke="#111" stroke-width="2.6" fill="none"/><path d="M1053 115l1 9 7-4z" fill="#111"/><circle cx="1067" cy="124" r="2.6" fill="#ff1a1a"/><rect x="1086" y="112.7" width="23.6" height="21.7" fill="none" stroke="#111" stroke-width="1.4"/><path d="M1087.3 133.7L1107.6 114" stroke="#111" stroke-width="3.2"/><path d="M1087.8 133.2L1107.1 114.5" stroke="#fff" stroke-width="1"/><path d="M1090.7 134.4L1109 117.5V134.4Z" stroke="#ff2a5a" stroke-width="1.4" fill="none"/><circle cx="1087.3" cy="133.7" r="1.9" fill="#111"/><circle cx="1107.6" cy="114" r="1.9" fill="#111"/><path d="M1117.75 134.4L1125.2 113.4V134.4Z" stroke="#111" stroke-width="1.3" fill="none"/><path d="M1128.6 112L1128.6 135" stroke="#111" stroke-width="0.9" stroke-dasharray="1.5 1"/><path d="M1131.3 112.7V134.4H1140Z" stroke="#ff2a5a" stroke-width="1.3" fill="none"/><circle cx="1128.6" cy="123" r="1.5" fill="#111"/><path d="M1151 132.4L1163 120.5" stroke="#111" stroke-width="2.6"/><path d="M1167 116.5l-9 1.5 7.5 7.5z" fill="#111"/><circle cx="1169.2" cy="114.8" r="2.7" fill="#ff1a1a"/><circle cx="1151" cy="132.4" r="2.7" fill="#111"/><path d="M1180.7 118.2L1188.8 114.8L1192.9 114.1L1201 114.1M1188.8 114.8L1193.6 133.7M1192.9 114.1L1193.6 133.7" stroke="#333" stroke-width="1.2" fill="none"/><circle cx="1180.7" cy="118.2" r="1.9" fill="#1a0a0a"/><circle cx="1188.8" cy="114.8" r="1.9" fill="#ff3c1e"/><circle cx="1192.9" cy="114.1" r="1.9" fill="#ff3c1e"/><circle cx="1201" cy="114.1" r="1.9" fill="#1a0a0a"/><circle cx="1193.6" cy="133.7" r="1.9" fill="#1a0a0a"/><path d="M1227 135V120c0-3 2-4 2-7h4l2 5c2 2 2 4 3 6l1 11z" stroke="#cfcfcf" stroke-width="0.9" fill="#fbfbfb"/><path d="M1240.5 124h4v4h4v4h-4v4h-4v-4h-4v-4h4z" fill="#6ab03a" stroke="#4a8a20" stroke-width="0.5"/><path d="M1260.4 130.3L1263 122L1273 114L1277.6 118.9L1269.5 128.5Z" stroke="#222" stroke-width="1.4" fill="none"/><path d="M1260.4 130.3L1267 123.5" stroke="#222" stroke-width="1.1"/><circle cx="1267" cy="123.5" r="1.3" fill="none" stroke="#222" stroke-width="1"/><circle cx="1259.3" cy="132" r="1.6" fill="#ff1a1a"/><path d="M1272 113L1278.5 119.5" stroke="#222" stroke-width="1.4"/><path d="M1297 120l-5.5 5.5a3.6 3.6 0 0 0 5 5l5.5-5.5a3.6 3.6 0 0 0-5-5z M1297 118.5l5-5a3.6 3.6 0 0 1 5 5l-5 5" stroke="#222" stroke-width="1.8" fill="none"/><circle cx="1306.2" cy="130.6" r="4.6" fill="#222"/><path d="M1306.2 127.6v6M1303.2 130.6h6" stroke="#fff" stroke-width="1.4"/><path d="M1320 113.2Q1330.3 117 1340.6 113.2Q1337 123.5 1340.6 133.8Q1330.3 130 1320 133.8Q1323.6 123.5 1320 113.2Z" stroke="#333" stroke-width="1.2" fill="none"/><path d="M1321 132.5L1339.5 114.5" stroke="#ff1a1a" stroke-width="1.4" stroke-dasharray="2.5 1.5"/><circle cx="1320" cy="113.2" r="1.7" fill="#300"/><circle cx="1340.6" cy="113.2" r="1.7" fill="#300"/><circle cx="1320" cy="133.8" r="1.7" fill="#300"/><circle cx="1340.6" cy="133.8" r="1.7" fill="#300"/><path d="M1365.5 115.5h18v5a5.5 5.5 0 1 1 -2 10.5h-16z" stroke="#bdbdbd" stroke-width="1.2" fill="none"/><rect x="1400" y="116" width="15" height="18" fill="#eaeaea" stroke="#d4d4d4" stroke-width="0.8"/><path d="M1398 124l6-4 7 5-5 3z" fill="#cfcfcf"/></svg>
<div style="position:absolute;left:6px;top:154px;width:6px;height:14px;background-image:radial-gradient(#cdcdcd 0.75px,transparent 0.9px);background-size:3px 3px"></div>
<div style="position:absolute;left:12px;top:150px;width:224px;height:20px;background:#fff;border:1px solid #c4c4c4;border-radius:3px;box-sizing:border-box"></div>
<div style="position:absolute;left:216px;top:151px;width:19px;height:18px;background:linear-gradient(#f6f6f6,#ebebeb)"></div>
<svg style="position:absolute;left:219px;top:157px;overflow:visible" width="10" height="6" viewBox="0 0 10 6"><path d="M0 0h10l-5 5z" fill="#4a4a4a"/></svg>
<div style="position:absolute;left:14.47px;top:152.57px;font-size:13.5px;line-height:13.5px;color:#1c1c1c;font-weight:normal;letter-spacing:-0.283px;white-space:nowrap;">DejaVu Sans</div>
<div style="position:absolute;left:237px;top:150px;width:40px;height:20px;background:linear-gradient(#fcfcfc,#f0f0f0);border:1px solid #c4c4c4;border-radius:3px;box-sizing:border-box"></div>
<div style="position:absolute;left:241.50px;top:152.15px;font-size:14px;line-height:14px;color:#1c1c1c;font-weight:normal;letter-spacing:0.500px;white-space:nowrap;">32</div>
<svg style="position:absolute;left:262px;top:157px;overflow:visible" width="10" height="6" viewBox="0 0 10 6"><path d="M0 0h10l-5 5z" fill="#4a4a4a"/></svg>
<div style="position:absolute;left:279.5px;top:146px;width:30px;height:28.5px;background:linear-gradient(#dedede,#d4d4d4);border:1px solid #c4c4c4;border-radius:2px;box-sizing:border-box"></div>
<svg style="position:absolute;left:0px;top:0px;overflow:visible" width="1872" height="200" viewBox="0 0 1872 200"><path d="M283.5 160c5.5-9.5 17.5-9.5 23 0c-5.5 9.5-17.5 9.5-23 0z" fill="none" stroke="#4a4a4a" stroke-width="2.2"/><circle cx="294.6" cy="159.6" r="5.4" fill="#4a4a4a"/><circle cx="292.2" cy="157.6" r="1.9" fill="#eee"/><path d="M317 167.9L323.2 151.8L329.5 167.9M319.2 162.3h8" fill="none" stroke="#111" stroke-width="1.9"/><path d="M329.7 155.5l2.4-3 2.4 3z" fill="#3a7ae0"/><path d="M350.3 167.9L355.5 155L360.7 167.9M352.2 163.3h6.6" fill="none" stroke="#111" stroke-width="1.7"/><path d="M361 151.5h4.8l-2.4 3z" fill="#3a7ae0"/><path d="M384.5 156.5l6.5-6 6.5 6.5-6.5 6.5z" fill="#b8b8b8"/><path d="M389.2 157l2.6-7.8" stroke="#222" stroke-width="1"/><circle cx="389.2" cy="157" r="0.9" fill="#111"/><path d="M380.5 164c0-4 1.5-8 5-8.3" fill="none" stroke="#4a8ad0" stroke-width="1.6"/><path d="M378.3 170.5l2.9-6.8 2.9 6.8M379.3 168.3h3.8" fill="none" stroke="#111" stroke-width="1.2"/><path d="M427 153h13v13h-13z" fill="none" stroke="#444" stroke-width="1.5"/><circle cx="426" cy="166" r="2.6" fill="#fff" stroke="#3a7ae0" stroke-width="1.4"/><circle cx="441" cy="153" r="2.6" fill="#fff" stroke="#3a7ae0" stroke-width="1.4"/><path d="M455.5 169.5V150.5h6.5l8.5 18l4-11" fill="none" stroke="#8a7ae8" stroke-width="1"/><path d="M455.5 169.5C456 150 461 150 466 160C469 166 471 163 474 155" fill="none" stroke="#444" stroke-width="1.1"/><circle cx="455.5" cy="169.5" r="1.3" fill="#3a7ae0"/><circle cx="455.5" cy="150.5" r="1.3" fill="#3a7ae0"/><circle cx="462" cy="150.5" r="1.3" fill="#3a7ae0"/><circle cx="470.5" cy="168.5" r="1.3" fill="#3a7ae0"/><circle cx="474.5" cy="157" r="1.3" fill="#3a7ae0"/></svg>
<div style="position:absolute;left:481.4px;top:146px;width:29px;height:28.5px;background:linear-gradient(#dedede,#d4d4d4);border:1px solid #c4c4c4;border-radius:2px;box-sizing:border-box"></div>
<svg style="position:absolute;left:484px;top:148px;overflow:visible" width="24" height="24" viewBox="0 0 24 24"><path d="M12 1v22M1 12h22" stroke="#111" stroke-width="2.2"/><circle cx="12" cy="12" r="5" fill="none" stroke="#3a7ae0" stroke-width="2.2"/></svg>
<div style="position:absolute;left:412px;top:154px;width:6px;height:14px;background-image:radial-gradient(#cdcdcd 0.75px,transparent 0.9px);background-size:3px 3px"></div>
<div style="position:absolute;left:2.85px;top:180.42px;font-size:12.5px;line-height:12.5px;color:#1c1c1c;font-weight:normal;letter-spacing:0.225px;white-space:nowrap;">Toolbox</div>
<svg style="position:absolute;left:73px;top:181px;overflow:visible" width="24" height="11" viewBox="0 0 24 11"><rect x="0.5" y="0.5" width="9" height="9" rx="2" fill="#e4e4e4" stroke="#9a9a9a" stroke-width="0.8"/><rect x="3" y="4" width="4" height="4" fill="none" stroke="#777" stroke-width="0.9"/><path d="M4 4V2.5h3.5V6" fill="none" stroke="#777" stroke-width="0.9"/><rect x="12" y="0.5" width="9.5" height="9" rx="2" fill="#d6d6d6" stroke="#9a9a9a" stroke-width="0.8"/><path d="M14.5 2.5l4.5 4.5M19 2.5l-4.5 4.5" stroke="#555" stroke-width="1.3"/></svg>
<svg style="position:absolute;left:0px;top:0px;overflow:visible" width="110" height="620" viewBox="0 0 110 620"><path d="M0 195.5H60L80.5 216H96" fill="none" stroke="#707070" stroke-width="1"/><path d="M0 222.5H60L80.5 243H96" fill="none" stroke="#707070" stroke-width="1"/><path d="M0 248.5H60L80.5 269H96" fill="none" stroke="#707070" stroke-width="1"/><path d="M0 274.5H60L80.5 295H96" fill="none" stroke="#707070" stroke-width="1"/><path d="M0 467.5H60L80.5 488H96" fill="none" stroke="#707070" stroke-width="1"/><path d="M0 494.5H60L80.5 515H96" fill="none" stroke="#707070" stroke-width="1"/><path d="M0 520.5H60L80.5 541H96" fill="none" stroke="#707070" stroke-width="1"/><path d="M0 546.5H60L80.5 567H96" fill="none" stroke="#707070" stroke-width="1"/><path d="M0 573.5H60L80.5 594H96" fill="none" stroke="#707070" stroke-width="1"/><circle cx="9" cy="205.5" r="2.6" fill="#111"/><path d="M4.2 237L14.6 227.2" stroke="#555" stroke-width="1"/><path d="M4.5 254.5h10" stroke="#222" stroke-width="1.3"/><circle cx="5" cy="254.5" r="1.3" fill="#222"/><circle cx="14.5" cy="254.5" r="1.3" fill="#222"/><path d="M9 256c-2 1-3 4-3.5 6" fill="none" stroke="#6a8ac0" stroke-width="0.9"/><path d="M12.5 283A5 5 0 1 0 13.5 287" fill="none" stroke="#6a8ac0" stroke-width="0.9"/><path d="M7 481c-2-1 0-5 4-7" fill="none" stroke="#6a8ac0" stroke-width="1.2"/><path d="M6 481c3 0 7-3 7-6" fill="none" stroke="#6a8ac0" stroke-width="1.2"/><rect x="4.5" y="498.5" width="9" height="9" fill="#cfe3f7" stroke="#3a8ae0" stroke-width="0.9" stroke-dasharray="1.5 1"/><path d="M10 502v8l2-2 2 3 1-1-2-3h3z" fill="#fff" stroke="#777" stroke-width="0.7"/><rect x="3.5" y="524.5" width="11" height="11" rx="1" fill="none" stroke="#3a6ae0" stroke-width="1"/><rect x="5" y="526" width="8" height="8" fill="none" stroke="#333" stroke-width="1.1"/><path d="M4.5 551v10h10v-8h-6v-2z" fill="none" stroke="#222" stroke-width="1.1"/><circle cx="4.5" cy="551" r="1" fill="#3a6ae0"/><circle cx="8.5" cy="551" r="1" fill="#3a6ae0"/><circle cx="8.5" cy="553" r="1" fill="#3a6ae0"/><circle cx="14.5" cy="553" r="1" fill="#3a6ae0"/><circle cx="14.5" cy="561" r="1" fill="#3a6ae0"/><circle cx="4.5" cy="561" r="1" fill="#3a6ae0"/><circle cx="7.5" cy="585" r="3" fill="#2a6ac0"/><circle cx="12.5" cy="579.5" r="2.3" fill="#2a6ac0"/><circle cx="7.5" cy="585" r="1" fill="#efefef"/><circle cx="12.5" cy="579.5" r="0.8" fill="#efefef"/></svg>
<div style="position:absolute;left:19.48px;top:198.15px;font-size:14px;line-height:14px;color:#1c1c1c;font-weight:normal;letter-spacing:0.562px;white-space:nowrap;">Point</div>
<div style="position:absolute;left:19.48px;top:224.65px;font-size:14px;line-height:14px;color:#1c1c1c;font-weight:normal;letter-spacing:0.550px;white-space:nowrap;">Line</div>
<div style="position:absolute;left:19.98px;top:251.15px;font-size:14px;line-height:14px;color:#1c1c1c;font-weight:normal;letter-spacing:0.719px;white-space:nowrap;">Curve</div>
<div style="position:absolute;left:20.60px;top:277.65px;font-size:14px;line-height:14px;color:#1c1c1c;font-weight:normal;letter-spacing:0.438px;white-space:nowrap;">Arc</div>
<div style="position:absolute;left:19.62px;top:470.65px;font-size:14px;line-height:14px;color:#1c1c1c;font-weight:normal;letter-spacing:0.797px;white-space:nowrap;">Ellipt...</div>
<div style="position:absolute;left:20.12px;top:497.15px;font-size:14px;line-height:14px;color:#1c1c1c;font-weight:normal;letter-spacing:0.896px;white-space:nowrap;">Oper...</div>
<div style="position:absolute;left:20.75px;top:523.65px;font-size:14px;line-height:14px;color:#1c1c1c;font-weight:normal;letter-spacing:0.458px;white-space:nowrap;">Add ...</div>
<div style="position:absolute;left:19.62px;top:550.15px;font-size:14px;line-height:14px;color:#1c1c1c;font-weight:normal;letter-spacing:0.643px;white-space:nowrap;">Patte...</div>
<div style="position:absolute;left:19.62px;top:576.65px;font-size:14px;line-height:14px;color:#1c1c1c;font-weight:normal;letter-spacing:0.925px;white-space:nowrap;">Layout</div>
<div style="position:absolute;left:6.5px;top:306.5px;width:32px;height:30.5px;background:linear-gradient(#dcdcdc,#d2d2d2);border:1px solid #c8c8c8;border-radius:3px;box-sizing:border-box"></div>
<svg style="position:absolute;left:14px;top:310px;overflow:visible" width="20" height="24" viewBox="0 0 20 24"><path d="M2 2v17l4.5-4.5 3.5 8 3.5-1.5-3.5-8h7z" fill="#fff" stroke="#222" stroke-width="1.2" stroke-linejoin="round"/></svg>
<div style="position:absolute;left:6.5px;top:341.3px;width:31.5px;height:31px;background:linear-gradient(#f8f8f8,#ececec);border:1px solid #d0d0d0;border-radius:3px;box-sizing:border-box;"></div>
<div style="position:absolute;left:43.5px;top:341.3px;width:31.5px;height:31px;background:linear-gradient(#f8f8f8,#ececec);border:1px solid #d0d0d0;border-radius:3px;box-sizing:border-box;"></div>
<div style="position:absolute;left:6.5px;top:375.6px;width:31.5px;height:31px;background:linear-gradient(#f8f8f8,#ececec);border:1px solid #d0d0d0;border-radius:3px;box-sizing:border-box;"></div>
<div style="position:absolute;left:43.5px;top:375.6px;width:31.5px;height:31px;background:linear-gradient(#f8f8f8,#ececec);border:1px solid #d0d0d0;border-radius:3px;box-sizing:border-box;"></div>
<div style="position:absolute;left:6.5px;top:410.2px;width:31.5px;height:31px;background:linear-gradient(#f8f8f8,#ececec);border:1px solid #d0d0d0;border-radius:3px;box-sizing:border-box;"></div>
<div style="position:absolute;left:43.5px;top:410.2px;width:31.5px;height:31px;background:linear-gradient(#f8f8f8,#ececec);border:1px solid #d0d0d0;border-radius:3px;box-sizing:border-box;"></div>
<div style="position:absolute;left:6.5px;top:444.6px;width:31.5px;height:18.5px;background:linear-gradient(#f8f8f8,#ececec);border:1px solid #d0d0d0;border-radius:3px;box-sizing:border-box;border-bottom:none;border-radius:3px 3px 0 0"></div>
<div style="position:absolute;left:43.5px;top:444.6px;width:31.5px;height:18.5px;background:linear-gradient(#f8f8f8,#ececec);border:1px solid #d0d0d0;border-radius:3px;box-sizing:border-box;border-bottom:none;border-radius:3px 3px 0 0"></div>
<svg style="position:absolute;left:0px;top:0px;overflow:visible" width="100" height="470" viewBox="0 0 100 470"><circle cx="13.5" cy="365.5" r="1.7" fill="#1a0a0a"/><path d="M18.5 348C23 349 27 353 28.5 358" stroke="#ff3c1e" stroke-width="1.6" fill="none"/><path d="M48 348C57 347 64 353 65 366" stroke="#222" stroke-width="1.8" fill="none"/><circle cx="59.5" cy="349.5" r="2" fill="#ff3c1e"/><path d="M11 389C13 393 21 394 24.5 390C27 387 27 383 26 381" stroke="#3a1010" stroke-width="1.8" fill="none"/><path d="M11 380L33 402" stroke="#ff2a5a" stroke-width="1.3" stroke-dasharray="2.5 1.5"/><circle cx="23.5" cy="390.5" r="2" fill="#ff3c1e"/><circle cx="32.5" cy="401" r="1.8" fill="#1a0a0a"/><path d="M47.5 379C55 379 63 384 63 390.5C63 397 55 402 47.5 402" stroke="#1a1aff" stroke-width="1.5" fill="none"/><path d="M71 379C64 379 56 384 56 390.5C56 397 64 402 71 402" stroke="#22bb22" stroke-width="1.5" fill="none"/><circle cx="59" cy="381" r="2" fill="#ff1a1a"/><circle cx="59" cy="400" r="2" fill="#ff1a1a"/><circle cx="51.5" cy="390.5" r="1.9" fill="#1a0a0a"/><circle cx="67" cy="390.5" r="1.9" fill="#1a0a0a"/><circle cx="17.5" cy="429" r="7" fill="none" stroke="#33bb33" stroke-width="1.3" stroke-dasharray="2.2 1.5"/><circle cx="24" cy="421" r="7" fill="none" stroke="#3333ff" stroke-width="1.3" stroke-dasharray="2.2 1.5"/><circle cx="17" cy="420.5" r="2" fill="#ff1a1a"/><circle cx="27.5" cy="428.5" r="2" fill="#ff1a1a"/><circle cx="55.5" cy="425" r="6.5" fill="none" stroke="#33bb33" stroke-width="1.3" stroke-dasharray="2.2 1.5"/><path d="M47.5 413.5L70 425.5L47.5 437" stroke="#ff2a5a" stroke-width="1.2" fill="none" stroke-dasharray="2.5 1.5"/><circle cx="56.5" cy="418.5" r="2" fill="#ff1a1a"/><circle cx="56.5" cy="432" r="2" fill="#ff1a1a"/><circle cx="54" cy="425" r="1.9" fill="#1a0a0a"/><circle cx="70" cy="425.5" r="1.9" fill="#1a0a0a"/><path d="M10 462C15 456 21 454 25 456" stroke="#33bb33" stroke-width="1.6" fill="none"/><path d="M13 448L33 463" stroke="#ff2a5a" stroke-width="1.2" stroke-dasharray="2.5 1.5"/><circle cx="24" cy="455.5" r="2" fill="#ff1a1a"/><path d="M49 463A10 10 0 0 1 69 463" stroke="#333" stroke-width="1.8" fill="none"/><path d="M53 463A6 6 0 0 1 65 463" stroke="#33bb33" stroke-width="1.3" fill="none" stroke-dasharray="2 1.2"/><circle cx="59" cy="460" r="2" fill="#ff1a1a"/></svg>
<div style="position:absolute;left:82.5px;top:300.5px;width:13.5px;height:162px;background:linear-gradient(90deg,#f2f2f2,#fafafa);border-left:1px solid #dadada"></div>
<div style="position:absolute;left:82.5px;top:313.5px;width:13.5px;height:1px;background:#d8d8d8"></div>
<div style="position:absolute;left:83.5px;top:434.8px;width:12.5px;height:15.7px;background:#dcdcdc;border-top:1px solid #cfcfcf;box-sizing:border-box"></div>
<svg style="position:absolute;left:85px;top:302px;overflow:visible" width="10" height="160" viewBox="0 0 10 160"><path d="M1 9l4-4 4 4z" fill="#555"/><path d="M1 152l4 4 4-4z" fill="#555"/></svg>
<div style="position:absolute;left:98px;top:607px;width:6px;height:5px;background-image:radial-gradient(#cdcdcd 0.75px,transparent 0.9px);background-size:3px 3px"></div>
<div style="position:absolute;left:105px;top:181px;width:1482px;height:855px;background:#fff;border:1px solid #c9c9c9;box-sizing:border-box"></div>
<svg style="position:absolute;left:0px;top:0px;overflow:visible" width="1920" height="1080" viewBox="0 0 1920 1080"><path d="M1014.85 728.79 L1014.66 726.36 L1014.33 724.01 L1013.87 721.73 L1013.29 719.51 L1012.59 717.36 L1011.78 715.27 L1010.86 713.24 L1009.85 711.26 L1008.74 709.34 L1007.54 707.47 L1006.27 705.65 L1004.91 703.87 L1003.49 702.14 L1002.01 700.45 L1000.46 698.79 L998.87 697.17 L997.23 695.58 L995.55 694.02 L993.84 692.49 L992.10 690.98 L990.34 689.49 L988.56 688.02 L986.77 686.57 L984.97 685.13 L983.17 683.70 L981.36 682.29 L979.54 680.90 L977.72 679.51 L975.89 678.14 L974.05 676.78 L972.21 675.43 L970.36 674.10 L968.50 672.77 L966.64 671.46 L964.77 670.15 L962.90 668.86 L961.02 667.57 L959.14 666.30 L957.25 665.03 L955.36 663.77 L953.47 662.52 L951.57 661.28 L949.66 660.04 L947.75 658.81 L945.84 657.58 L943.92 656.37 L942.00 655.15 L940.08 653.94 L938.15 652.74 L936.23 651.54 L934.29 650.35 L932.36 649.16 L930.42 647.98 L928.48 646.80 L926.53 645.63 L924.58 644.47 L922.63 643.30 L920.68 642.15 L918.72 640.99 L916.76 639.85 L914.79 638.70 L912.83 637.57 L910.86 636.43 L908.89 635.31 L906.91 634.18 L904.93 633.07 L902.95 631.95 L900.97 630.84 L898.98 629.74 L896.99 628.64 L895.00 627.55 L893.00 626.46 L891.01 625.37 L889.00 624.29 L887.00 623.22 L885.00 622.15 L882.99 621.08 L880.98 620.02 L878.96 618.96 L876.95 617.91 L874.93 616.86 L872.91 615.82 L870.88 614.78 L868.86 613.75 L866.83 612.72 L864.80 611.69 L862.76 610.67 L860.73 609.65 L858.69 608.64 L856.65 607.63 L854.60 606.63 L852.56 605.63 L850.51 604.64 L848.46 603.65 L846.41 602.66 L844.35 601.68 L842.30 600.70 L840.24 599.73 L838.18 598.76 L836.11 597.79 L834.05 596.83 L831.98 595.88 L829.91 594.92 L827.84 593.98 L825.77 593.03 L823.69 592.09 L821.62 591.15 L819.54 590.22 L817.46 589.29 L815.37 588.37 L813.29 587.45 L811.20 586.53 L809.11 585.62 L807.02 584.71 L804.93 583.81 L802.84 582.91 L800.74 582.01 L798.64 581.12 L796.54 580.23 L794.44 579.35 L792.34 578.46 L790.24 577.59 L788.13 576.71 L786.02 575.84 L783.92 574.98 L781.81 574.11 L779.69 573.25 L777.58 572.40 L775.47 571.55 L773.35 570.70 L771.23 569.85 L769.11 569.01 L766.99 568.18 L764.87 567.34 L762.75 566.51 L760.62 565.69 L758.50 564.86 L756.37 564.04 L754.24 563.23 L752.11 562.41 L749.98 561.60 L747.85 560.80 L745.72 559.99 L743.59 559.20 L741.45 558.40 L739.32 557.61 L737.18 556.82 L735.04 556.03 L732.90 555.25 L730.76 554.47 L728.62 553.69 L726.48 552.92 L724.33 552.15 L722.19 551.38 L720.05 550.62 L717.90 549.86 L715.75 549.10 L713.60 548.35 L711.46 547.60 L709.31 546.85 L707.16 546.11 L705.00 545.37 L702.85 544.64 L700.70 543.91 L698.54 543.18 L696.38 542.46 L694.23 541.74 L692.07 541.03 L689.91 540.32 L687.74 539.62 L685.58 538.92 L683.42 538.23 L681.25 537.54 L679.08 536.85 L676.91 536.17 L674.74 535.50 L672.57 534.83 L670.40 534.17 L668.22 533.51 L666.05 532.86 L663.87 532.21 L661.69 531.57 L659.51 530.93 L657.33 530.30 L655.14 529.68 L652.96 529.06 L650.77 528.45 L648.58 527.84 L646.39 527.24 L644.19 526.65 L642.00 526.06 L639.80 525.48 L637.60 524.91 L635.40 524.34 L633.20 523.78 L631.00 523.23 L628.79 522.68 L626.58 522.15 L624.37 521.61 L622.16 521.09 L619.95 520.57 L617.73 520.06 L615.51 519.56 L613.29 519.07 L611.07 518.58 L608.84 518.10 L606.61 517.63 L604.38 517.17 L602.15 516.71 L599.92 516.26 L597.68 515.82 L595.44 515.39 L593.20 514.97 L590.96 514.56 L588.71 514.15 L586.47 513.76 L584.21 513.38 L581.96 513.01 L579.70 512.66 L577.45 512.33 L575.18 512.02 L572.92 511.73 L570.65 511.47 L568.38 511.23 L566.11 511.03 L563.83 510.85 L561.55 510.71 L559.27 510.60 L556.98 510.54 L554.69 510.51 L552.40 510.52 L550.10 510.58 L547.80 510.68 L545.50 510.83 L543.19 511.03 L540.88 511.29 L538.57 511.60 L536.27 511.96 L533.98 512.39 L531.72 512.89 L529.48 513.45 L527.29 514.09 L525.14 514.81 L523.04 515.60 L521.01 516.48 L519.05 517.45 L517.16 518.50 L515.36 519.65 L513.65 520.90 L512.04 522.26 L510.54 523.71 L509.16 525.28 L507.90 526.96 L506.77 528.75 L505.77 530.66 L504.91 532.68 L504.16 534.79 L503.53 536.98 L503.00 539.25 L502.58 541.57 L502.24 543.94 L501.99 546.35 L501.82 548.78 L501.72 551.23 L501.68 553.68 L501.70 556.12 L501.76 558.54 L501.87 560.92 L502.01 563.27 L502.18 565.59 L502.38 567.88 L502.60 570.15 L502.84 572.41 L503.09 574.66 L503.36 576.91 L503.63 579.15 L503.91 581.40 L504.21 583.64 L504.51 585.88 L504.82 588.12 L505.14 590.36 L505.46 592.60 L505.80 594.83 L506.15 597.07 L506.50 599.30 L506.87 601.54 L507.24 603.77 L507.62 606.00 L508.01 608.23 L508.41 610.45 L508.81 612.68 L509.23 614.91 L509.65 617.13 L510.08 619.35 L510.52 621.57 L510.97 623.79 L511.43 626.01 L511.89 628.23 L512.36 630.45 L512.84 632.66 L513.33 634.88 L513.82 637.09 L514.33 639.30 L514.84 641.51 L515.36 643.72 L515.88 645.92 L516.41 648.13 L516.95 650.33 L517.50 652.53 L518.06 654.73 L518.62 656.93 L519.19 659.13 L519.77 661.33 L520.35 663.52 L520.94 665.72 L521.54 667.91 L522.14 670.10 L522.75 672.29 L523.37 674.48 L523.99 676.67 L524.63 678.85 L525.26 681.04 L525.91 683.22 L526.56 685.40 L527.21 687.58 L527.88 689.76 L528.55 691.93 L529.22 694.11 L529.90 696.28 L530.59 698.45 L531.29 700.62 L531.98 702.79 L532.69 704.96 L533.40 707.12 L534.12 709.29 L534.84 711.45 L535.57 713.61 L536.30 715.77 L537.04 717.93 L537.79 720.08 L538.54 722.24 L539.29 724.39 L540.05 726.54 L540.82 728.69 L541.59 730.84 L542.37 732.98 L543.15 735.13 L543.93 737.27 L544.72 739.41 L545.52 741.55 L546.32 743.69 L547.12 745.82 L547.93 747.96 L548.75 750.09 L549.57 752.22 L550.39 754.35 L551.22 756.48 L552.05 758.61 L552.89 760.73 L553.73 762.85 L554.57 764.97 L555.42 767.09 L556.27 769.21 L557.13 771.32 L557.99 773.44 L558.85 775.55 L559.72 777.66 L560.59 779.77 L561.47 781.87 L562.35 783.98 L563.23 786.08 L564.12 788.18 L565.01 790.28 L565.90 792.38 L566.80 794.47 L567.70 796.57 L568.60 798.66 L569.50 800.75 L570.41 802.84 L571.32 804.92 L572.24 807.01 L573.16 809.09 L574.08 811.17 L575.00 813.25 L575.92 815.33 L576.85 817.40 L577.78 819.47 L578.72 821.55 L579.65 823.61 L580.59 825.68 L581.53 827.75 L582.47 829.81 L583.42 831.87 L584.37 833.93 L585.32 835.99 L586.28 838.04 L587.23 840.10 L588.20 842.15 L589.16 844.20 L590.13 846.25 L591.10 848.29 L592.07 850.34 L593.05 852.38 L594.03 854.42 L595.01 856.46 L596.00 858.50 L596.99 860.54 L597.98 862.57 L598.98 864.60 L599.98 866.63 L600.98 868.66 L601.99 870.69 L603.00 872.71 L604.02 874.73 L605.04 876.76 L606.06 878.78 L607.09 880.79 L608.12 882.81 L609.16 884.82 L610.20 886.84 L611.24 888.85 L612.29 890.86 L613.34 892.87 L614.40 894.87 L615.46 896.88 L616.53 898.88 L617.60 900.88 L618.68 902.88 L619.76 904.88 L620.84 906.87 L621.93 908.87 L623.02 910.86 L624.12 912.85 L625.23 914.84 L626.34 916.83 L627.45 918.81 L628.57 920.80 L629.69 922.78 L630.82 924.76 L631.96 926.74 L633.10 928.72 L634.24 930.70 L635.40 932.68 L636.55 934.65 L637.71 936.62 L638.88 938.59 L640.05 940.56 L641.23 942.53 L642.42 944.49 L643.61 946.46 L644.80 948.42 L646.01 950.38 L647.21 952.34 L648.43 954.30 L649.65 956.26 L650.88 958.21 L652.12 960.15 L653.37 962.09 L654.62 964.02 L655.89 965.94 L657.17 967.85 L658.46 969.76 L659.76 971.65 L661.08 973.53 L662.41 975.39 L663.75 977.25 L665.11 979.08 L666.49 980.90 L667.88 982.70 L669.28 984.49 L670.71 986.26 L672.15 988.00 L673.62 989.73 L675.10 991.43 L676.60 993.11 L678.12 994.76 L679.67 996.39 L681.24 998.00 L682.82 999.57 L684.44 1001.12 L686.07 1002.64 L687.74 1004.13 L689.42 1005.59 L691.14 1007.02 L692.88 1008.41 L694.64 1009.77 L696.44 1011.10 L698.26 1012.39 L700.12 1013.64 L702.00 1014.86 L703.91 1016.03 L705.86 1017.17 L707.83 1018.26 L709.84 1019.32 L711.88 1020.33 L713.96 1021.30 L716.07 1022.22 L718.22 1023.09 L720.40 1023.92" fill="none" stroke="#a2a2a2" stroke-width="1"/><path d="M648.25 728.79 L648.44 726.36 L648.77 724.01 L649.23 721.73 L649.81 719.51 L650.51 717.36 L651.32 715.27 L652.24 713.24 L653.25 711.26 L654.36 709.34 L655.56 707.47 L656.83 705.65 L658.19 703.87 L659.61 702.14 L661.09 700.45 L662.64 698.79 L664.23 697.17 L665.87 695.58 L667.55 694.02 L669.26 692.49 L671.00 690.98 L672.76 689.49 L674.54 688.02 L676.33 686.57 L678.13 685.13 L679.93 683.70 L681.74 682.29 L683.56 680.90 L685.38 679.51 L687.21 678.14 L689.05 676.78 L690.89 675.43 L692.74 674.10 L694.60 672.77 L696.46 671.46 L698.33 670.15 L700.20 668.86 L702.08 667.57 L703.96 666.30 L705.85 665.03 L707.74 663.77 L709.63 662.52 L711.53 661.28 L713.44 660.04 L715.35 658.81 L717.26 657.58 L719.18 656.37 L721.10 655.15 L723.02 653.94 L724.95 652.74 L726.87 651.54 L728.81 650.35 L730.74 649.16 L732.68 647.98 L734.62 646.80 L736.57 645.63 L738.52 644.47 L740.47 643.30 L742.42 642.15 L744.38 640.99 L746.34 639.85 L748.31 638.70 L750.27 637.57 L752.24 636.43 L754.21 635.31 L756.19 634.18 L758.17 633.07 L760.15 631.95 L762.13 630.84 L764.12 629.74 L766.11 628.64 L768.10 627.55 L770.10 626.46 L772.09 625.37 L774.10 624.29 L776.10 623.22 L778.10 622.15 L780.11 621.08 L782.12 620.02 L784.14 618.96 L786.15 617.91 L788.17 616.86 L790.19 615.82 L792.22 614.78 L794.24 613.75 L796.27 612.72 L798.30 611.69 L800.34 610.67 L802.37 609.65 L804.41 608.64 L806.45 607.63 L808.50 606.63 L810.54 605.63 L812.59 604.64 L814.64 603.65 L816.69 602.66 L818.75 601.68 L820.80 600.70 L822.86 599.73 L824.92 598.76 L826.99 597.79 L829.05 596.83 L831.12 595.88 L833.19 594.92 L835.26 593.98 L837.33 593.03 L839.41 592.09 L841.48 591.15 L843.56 590.22 L845.64 589.29 L847.73 588.37 L849.81 587.45 L851.90 586.53 L853.99 585.62 L856.08 584.71 L858.17 583.81 L860.26 582.91 L862.36 582.01 L864.46 581.12 L866.56 580.23 L868.66 579.35 L870.76 578.46 L872.86 577.59 L874.97 576.71 L877.08 575.84 L879.18 574.98 L881.29 574.11 L883.41 573.25 L885.52 572.40 L887.63 571.55 L889.75 570.70 L891.87 569.85 L893.99 569.01 L896.11 568.18 L898.23 567.34 L900.35 566.51 L902.48 565.69 L904.60 564.86 L906.73 564.04 L908.86 563.23 L910.99 562.41 L913.12 561.60 L915.25 560.80 L917.38 559.99 L919.51 559.20 L921.65 558.40 L923.78 557.61 L925.92 556.82 L928.06 556.03 L930.20 555.25 L932.34 554.47 L934.48 553.69 L936.62 552.92 L938.77 552.15 L940.91 551.38 L943.05 550.62 L945.20 549.86 L947.35 549.10 L949.50 548.35 L951.64 547.60 L953.79 546.85 L955.94 546.11 L958.10 545.37 L960.25 544.64 L962.40 543.91 L964.56 543.18 L966.72 542.46 L968.87 541.74 L971.03 541.03 L973.19 540.32 L975.36 539.62 L977.52 538.92 L979.68 538.23 L981.85 537.54 L984.02 536.85 L986.19 536.17 L988.36 535.50 L990.53 534.83 L992.70 534.17 L994.88 533.51 L997.05 532.86 L999.23 532.21 L1001.41 531.57 L1003.59 530.93 L1005.77 530.30 L1007.96 529.68 L1010.14 529.06 L1012.33 528.45 L1014.52 527.84 L1016.71 527.24 L1018.91 526.65 L1021.10 526.06 L1023.30 525.48 L1025.50 524.91 L1027.70 524.34 L1029.90 523.78 L1032.10 523.23 L1034.31 522.68 L1036.52 522.15 L1038.73 521.61 L1040.94 521.09 L1043.15 520.57 L1045.37 520.06 L1047.59 519.56 L1049.81 519.07 L1052.03 518.58 L1054.26 518.10 L1056.49 517.63 L1058.72 517.17 L1060.95 516.71 L1063.18 516.26 L1065.42 515.82 L1067.66 515.39 L1069.90 514.97 L1072.14 514.56 L1074.39 514.15 L1076.63 513.76 L1078.89 513.38 L1081.14 513.01 L1083.40 512.66 L1085.65 512.33 L1087.92 512.02 L1090.18 511.73 L1092.45 511.47 L1094.72 511.23 L1096.99 511.03 L1099.27 510.85 L1101.55 510.71 L1103.83 510.60 L1106.12 510.54 L1108.41 510.51 L1110.70 510.52 L1113.00 510.58 L1115.30 510.68 L1117.60 510.83 L1119.91 511.03 L1122.22 511.29 L1124.53 511.60 L1126.83 511.96 L1129.12 512.39 L1131.38 512.89 L1133.62 513.45 L1135.81 514.09 L1137.96 514.81 L1140.06 515.60 L1142.09 516.48 L1144.05 517.45 L1145.94 518.50 L1147.74 519.65 L1149.45 520.90 L1151.06 522.26 L1152.56 523.71 L1153.94 525.28 L1155.20 526.96 L1156.33 528.75 L1157.33 530.66 L1158.19 532.68 L1158.94 534.79 L1159.57 536.98 L1160.10 539.25 L1160.52 541.57 L1160.86 543.94 L1161.11 546.35 L1161.28 548.78 L1161.38 551.23 L1161.42 553.68 L1161.40 556.12 L1161.34 558.54 L1161.23 560.92 L1161.09 563.27 L1160.92 565.59 L1160.72 567.88 L1160.50 570.15 L1160.26 572.41 L1160.01 574.66 L1159.74 576.91 L1159.47 579.15 L1159.19 581.40 L1158.89 583.64 L1158.59 585.88 L1158.28 588.12 L1157.96 590.36 L1157.64 592.60 L1157.30 594.83 L1156.95 597.07 L1156.60 599.30 L1156.23 601.54 L1155.86 603.77 L1155.48 606.00 L1155.09 608.23 L1154.69 610.45 L1154.29 612.68 L1153.87 614.91 L1153.45 617.13 L1153.02 619.35 L1152.58 621.57 L1152.13 623.79 L1151.67 626.01 L1151.21 628.23 L1150.74 630.45 L1150.26 632.66 L1149.77 634.88 L1149.28 637.09 L1148.77 639.30 L1148.26 641.51 L1147.74 643.72 L1147.22 645.92 L1146.69 648.13 L1146.15 650.33 L1145.60 652.53 L1145.04 654.73 L1144.48 656.93 L1143.91 659.13 L1143.33 661.33 L1142.75 663.52 L1142.16 665.72 L1141.56 667.91 L1140.96 670.10 L1140.35 672.29 L1139.73 674.48 L1139.11 676.67 L1138.47 678.85 L1137.84 681.04 L1137.19 683.22 L1136.54 685.40 L1135.89 687.58 L1135.22 689.76 L1134.55 691.93 L1133.88 694.11 L1133.20 696.28 L1132.51 698.45 L1131.81 700.62 L1131.12 702.79 L1130.41 704.96 L1129.70 707.12 L1128.98 709.29 L1128.26 711.45 L1127.53 713.61 L1126.80 715.77 L1126.06 717.93 L1125.31 720.08 L1124.56 722.24 L1123.81 724.39 L1123.05 726.54 L1122.28 728.69 L1121.51 730.84 L1120.73 732.98 L1119.95 735.13 L1119.17 737.27 L1118.38 739.41 L1117.58 741.55 L1116.78 743.69 L1115.98 745.82 L1115.17 747.96 L1114.35 750.09 L1113.53 752.22 L1112.71 754.35 L1111.88 756.48 L1111.05 758.61 L1110.21 760.73 L1109.37 762.85 L1108.53 764.97 L1107.68 767.09 L1106.83 769.21 L1105.97 771.32 L1105.11 773.44 L1104.25 775.55 L1103.38 777.66 L1102.51 779.77 L1101.63 781.87 L1100.75 783.98 L1099.87 786.08 L1098.98 788.18 L1098.09 790.28 L1097.20 792.38 L1096.30 794.47 L1095.40 796.57 L1094.50 798.66 L1093.60 800.75 L1092.69 802.84 L1091.78 804.92 L1090.86 807.01 L1089.94 809.09 L1089.02 811.17 L1088.10 813.25 L1087.18 815.33 L1086.25 817.40 L1085.32 819.47 L1084.38 821.55 L1083.45 823.61 L1082.51 825.68 L1081.57 827.75 L1080.63 829.81 L1079.68 831.87 L1078.73 833.93 L1077.78 835.99 L1076.82 838.04 L1075.87 840.10 L1074.90 842.15 L1073.94 844.20 L1072.97 846.25 L1072.00 848.29 L1071.03 850.34 L1070.05 852.38 L1069.07 854.42 L1068.09 856.46 L1067.10 858.50 L1066.11 860.54 L1065.12 862.57 L1064.12 864.60 L1063.12 866.63 L1062.12 868.66 L1061.11 870.69 L1060.10 872.71 L1059.08 874.73 L1058.06 876.76 L1057.04 878.78 L1056.01 880.79 L1054.98 882.81 L1053.94 884.82 L1052.90 886.84 L1051.86 888.85 L1050.81 890.86 L1049.76 892.87 L1048.70 894.87 L1047.64 896.88 L1046.57 898.88 L1045.50 900.88 L1044.42 902.88 L1043.34 904.88 L1042.26 906.87 L1041.17 908.87 L1040.08 910.86 L1038.98 912.85 L1037.87 914.84 L1036.76 916.83 L1035.65 918.81 L1034.53 920.80 L1033.41 922.78 L1032.28 924.76 L1031.14 926.74 L1030.00 928.72 L1028.86 930.70 L1027.70 932.68 L1026.55 934.65 L1025.39 936.62 L1024.22 938.59 L1023.05 940.56 L1021.87 942.53 L1020.68 944.49 L1019.49 946.46 L1018.30 948.42 L1017.09 950.38 L1015.89 952.34 L1014.67 954.30 L1013.45 956.26 L1012.22 958.21 L1010.98 960.15 L1009.73 962.09 L1008.48 964.02 L1007.21 965.94 L1005.93 967.85 L1004.64 969.76 L1003.34 971.65 L1002.02 973.53 L1000.69 975.39 L999.35 977.25 L997.99 979.08 L996.61 980.90 L995.22 982.70 L993.82 984.49 L992.39 986.26 L990.95 988.00 L989.48 989.73 L988.00 991.43 L986.50 993.11 L984.98 994.76 L983.43 996.39 L981.86 998.00 L980.28 999.57 L978.66 1001.12 L977.03 1002.64 L975.36 1004.13 L973.68 1005.59 L971.96 1007.02 L970.22 1008.41 L968.46 1009.77 L966.66 1011.10 L964.84 1012.39 L962.98 1013.64 L961.10 1014.86 L959.19 1016.03 L957.24 1017.17 L955.27 1018.26 L953.26 1019.32 L951.22 1020.33 L949.14 1021.30 L947.03 1022.22 L944.88 1023.09 L942.70 1023.92" fill="none" stroke="#a2a2a2" stroke-width="1"/><path d="M720.6 729.1L832 457.5L943.3 729.1Z" fill="none" stroke="#a2a2a2" stroke-width="1"/><path d="M1103.21 344.61 L1102.94 343.98 L1102.66 343.35 L1102.36 342.73 L1102.04 342.12 L1101.71 341.52 L1101.36 340.92 L1101.00 340.33 L1100.62 339.74 L1100.22 339.16 L1099.81 338.58 L1099.38 338.02 L1098.94 337.45 L1098.48 336.89 L1098.00 336.34 L1097.51 335.79 L1097.00 335.25 L1096.48 334.72 L1095.94 334.18 L1095.38 333.66 L1094.81 333.14 L1094.22 332.62 L1093.61 332.11 L1092.99 331.60 L1092.36 331.10 L1091.70 330.60 L1091.03 330.11 L1090.35 329.62 L1089.64 329.14 L1088.93 328.66 L1088.19 328.19 L1087.44 327.72 L1086.68 327.25 L1085.89 326.79 L1085.09 326.33 L1084.28 325.88 L1083.45 325.42 L1082.60 324.98 L1081.74 324.54 L1080.86 324.10 L1079.97 323.66 L1079.05 323.23 L1078.13 322.80 L1077.19 322.38 L1076.23 321.95 L1075.25 321.54 L1074.26 321.12 L1073.26 320.71 L1072.23 320.30 L1071.20 319.90 L1070.14 319.49 L1069.07 319.10 L1067.99 318.70 L1066.89 318.31 L1065.77 317.92 L1064.64 317.53 L1063.50 317.14 L1062.34 316.76 L1061.16 316.38 L1059.97 316.01 L1058.76 315.63 L1057.54 315.26 L1056.30 314.89 L1055.05 314.53 L1053.78 314.16 L1052.50 313.80 L1051.20 313.45 L1049.89 313.09 L1048.56 312.74 L1047.22 312.38 L1045.86 312.04 L1044.49 311.69 L1043.11 311.35 L1041.71 311.00 L1040.29 310.66 L1038.86 310.33 L1037.42 309.99 L1035.97 309.66 L1034.50 309.33 L1033.01 309.00 L1031.51 308.68 L1030.00 308.35 L1028.48 308.03 L1026.94 307.71 L1025.39 307.39 L1023.82 307.08 L1022.24 306.77 L1020.65 306.46 L1019.05 306.15 L1017.43 305.84 L1015.80 305.54 L1014.15 305.24 L1012.50 304.94 L1010.83 304.64 L1009.15 304.35 L1007.46 304.05 L1005.75 303.76 L1004.03 303.48 L1002.30 303.19 L1000.56 302.91 L998.81 302.63 L997.04 302.35 L995.26 302.07 L993.48 301.80 L991.68 301.53 L989.87 301.26 L988.04 300.99 L986.21 300.73 L984.37 300.47 L982.51 300.21 L980.65 299.95 L978.77 299.70 L976.89 299.45 L974.99 299.20 L973.08 298.95 L971.17 298.71 L969.24 298.47 L967.30 298.23 L965.36 298.00 L963.40 297.76 L961.44 297.53 L959.47 297.31 L957.48 297.08 L955.49 296.86 L953.49 296.65 L951.48 296.43 L949.47 296.22 L947.44 296.01 L945.41 295.81 L943.37 295.60 L941.32 295.41 L939.26 295.21 L937.19 295.02 L935.12 294.83 L933.04 294.64 L930.95 294.46 L928.86 294.28 L926.76 294.10 L924.65 293.93 L922.53 293.76 L920.41 293.60 L918.28 293.44 L916.15 293.28 L914.01 293.12 L911.87 292.97 L909.71 292.82 L907.56 292.68 L905.40 292.54 L903.23 292.40 L901.06 292.27 L898.88 292.14 L896.70 292.02 L894.51 291.89 L892.32 291.78 L890.12 291.66 L887.92 291.55 L885.72 291.45 L883.51 291.35 L881.30 291.25 L879.08 291.15 L876.86 291.06 L874.64 290.98 L872.42 290.90 L870.19 290.82 L867.96 290.75 L865.73 290.68 L863.49 290.61 L861.25 290.55 L859.01 290.49 L856.77 290.44 L854.53 290.39 L852.28 290.35 L850.04 290.31 L847.79 290.27 L845.54 290.24 L843.29 290.21 L841.04 290.19 L838.79 290.17 L836.54 290.16 L834.28 290.15 L832.03 290.14 L829.78 290.14 L827.53 290.14 L825.27 290.15 L823.02 290.16 L820.77 290.17 L818.52 290.19 L816.27 290.21 L814.02 290.24 L811.78 290.27 L809.53 290.31 L807.29 290.35 L805.05 290.39 L802.81 290.44 L800.57 290.50 L798.33 290.55 L796.10 290.61 L793.87 290.68 L791.64 290.75 L789.42 290.82 L787.19 290.90 L784.97 290.98 L782.76 291.07 L780.55 291.16 L778.34 291.25 L776.13 291.35 L773.93 291.45 L771.74 291.55 L769.55 291.66 L767.36 291.78 L765.18 291.89 L763.00 292.01 L760.82 292.14 L758.66 292.27 L756.49 292.40 L754.34 292.54 L752.18 292.68 L750.04 292.82 L747.90 292.97 L745.76 293.12 L743.64 293.27 L741.51 293.43 L739.40 293.59 L737.29 293.75 L735.19 293.92 L733.09 294.09 L731.01 294.27 L728.92 294.45 L726.85 294.63 L724.78 294.81 L722.73 295.00 L720.68 295.19 L718.63 295.39 L716.60 295.59 L714.57 295.79 L712.55 295.99 L710.54 296.20 L708.54 296.41 L706.55 296.62 L704.57 296.84 L702.59 297.06 L700.63 297.28 L698.67 297.50 L696.73 297.73 L694.79 297.96 L692.86 298.20 L690.95 298.43 L689.04 298.67 L687.14 298.91 L685.25 299.16 L683.38 299.40 L681.51 299.65 L679.66 299.90 L677.81 300.16 L675.98 300.42 L674.15 300.68 L672.34 300.94 L670.54 301.20 L668.75 301.47 L666.98 301.74 L665.21 302.01 L663.45 302.29 L661.71 302.56 L659.98 302.84 L658.26 303.12 L656.55 303.41 L654.86 303.69 L653.18 303.98 L651.51 304.27 L649.85 304.57 L648.21 304.86 L646.57 305.16 L644.96 305.46 L643.35 305.76 L641.76 306.07 L640.18 306.37 L638.61 306.68 L637.06 306.99 L635.52 307.31 L633.99 307.62 L632.48 307.94 L630.98 308.26 L629.49 308.58 L628.02 308.91 L626.57 309.23 L625.12 309.56 L623.69 309.90 L622.28 310.23 L620.88 310.57 L619.49 310.91 L618.12 311.25 L616.76 311.59 L615.42 311.94 L614.09 312.29 L612.78 312.64 L611.48 312.99 L610.19 313.35 L608.93 313.71 L607.67 314.07 L606.43 314.43 L605.21 314.80 L604.00 315.17 L602.81 315.54 L601.63 315.91 L600.46 316.29 L599.32 316.67 L598.18 317.05 L597.07 317.44 L595.97 317.83 L594.88 318.22 L593.81 318.62 L592.76 319.01 L591.72 319.42 L590.69 319.82 L589.69 320.23 L588.69 320.64 L587.72 321.05 L586.76 321.47 L585.81 321.89 L584.89 322.32 L583.97 322.75 L583.08 323.18 L582.20 323.61 L581.33 324.05 L580.48 324.50 L579.65 324.94 L578.83 325.40 L578.03 325.85 L577.25 326.31 L576.48 326.77 L575.73 327.24 L574.99 327.71 L574.27 328.19 L573.57 328.67 L572.88 329.16 L572.21 329.65 L571.56 330.14 L570.92 330.64 L570.29 331.14 L569.69 331.65 L569.10 332.17 L568.52 332.69 L567.96 333.21 L567.42 333.74 L566.89 334.27 L566.38 334.81 L565.89 335.36 L565.41 335.91 L564.95 336.47 L564.50 337.03 L564.07 337.60 L563.66 338.17 L563.26 338.75 L562.88 339.33 L562.51 339.93 L562.16 340.52 L561.83 341.13 L561.51 341.74 L561.21 342.35 L560.92 342.98 L560.65 343.60 L560.39 344.24 L560.15 344.88 L559.93 345.53 L559.72 346.19 L559.53 346.85 L559.35 347.52 L559.19 348.20 L559.04 348.88 L558.91 349.57 L558.80 350.27 L558.70 350.97 L558.61 351.68 L558.54 352.40 L558.49 353.13 L558.45 353.87 L558.43 354.61 L558.42 355.36 L558.42 356.12 L558.45 356.88 L558.48 357.66 L558.53 358.44 L558.60 359.23 L558.68 360.02 L558.78 360.83 L558.89 361.64 L559.01 362.47 L559.15 363.30 L559.31 364.13 L559.48 364.98 L559.66 365.84 L559.86 366.70 L560.07 367.57 L560.30 368.45 L560.54 369.34 L560.79 370.24 L561.06 371.14 L561.34 372.06 L561.64 372.98 L561.95 373.91 L562.28 374.85 L562.62 375.80 L562.97 376.76 L563.33 377.73 L563.71 378.70 L564.11 379.69 L564.51 380.68 L564.93 381.68 L565.37 382.70 L565.82 383.72 L566.28 384.74 L566.75 385.78 L567.24 386.83 L567.74 387.89 L568.25 388.95 L568.77 390.02 L569.31 391.11 L569.86 392.20 L570.43 393.30 L571.01 394.41 L571.60 395.52 L572.20 396.65 L572.81 397.79 L573.44 398.93 L574.08 400.09 L574.73 401.25 L575.39 402.42 L576.07 403.60 L576.76 404.79 L577.46 405.98 L578.17 407.19 L578.90 408.40 L579.63 409.63 L580.38 410.86 L581.14 412.10 L581.91 413.34 L582.69 414.60 L583.49 415.87 L584.29 417.14 L585.11 418.42 L585.94 419.71 L586.78 421.01 L587.63 422.31 L588.49 423.63 L589.37 424.95 L590.25 426.28 L591.15 427.61 L592.05 428.96 L592.97 430.31 L593.90 431.67 L594.84 433.04 L595.78 434.42 L596.74 435.80 L597.71 437.19 L598.69 438.59 L599.69 439.99 L600.69 441.40 L601.70 442.82 L602.72 444.24 L603.75 445.68 L604.79 447.11 L605.84 448.56 L606.90 450.01 L607.97 451.47 L609.06 452.93 L610.15 454.40 L611.25 455.88 L612.36 457.36 L613.47 458.85 L614.60 460.35 L615.74 461.85 L616.89 463.35 L618.04 464.86 L619.21 466.38 L620.38 467.90 L621.57 469.43 L622.76 470.96 L623.96 472.50 L625.17 474.04 L626.39 475.59 L627.61 477.14 L628.85 478.69 L630.09 480.25 L631.34 481.82 L632.60 483.38 L633.87 484.96 L635.15 486.53 L636.44 488.11 L637.73 489.70 L639.03 491.28 L640.34 492.87 L641.65 494.47 L642.98 496.06 L644.31 497.66 L645.65 499.26 L647.00 500.87 L648.35 502.48 L649.71 504.09 L651.08 505.70 L652.46 507.32 L653.84 508.93 L655.23 510.55 L656.63 512.17 L658.03 513.79 L659.44 515.42 L660.86 517.04 L662.28 518.67 L663.71 520.30 L665.15 521.93 L666.59 523.56 L668.04 525.19 L669.49 526.82 L670.95 528.45 L672.42 530.09 L673.89 531.72 L675.37 533.35 L676.85 534.99 L678.34 536.62 L679.84 538.25 L681.34 539.88 L682.84 541.52 L684.35 543.15 L685.87 544.78 L687.39 546.41 L688.91 548.04 L690.44 549.67 L691.98 551.29 L693.52 552.92 L695.06 554.54 L696.61 556.16 L698.16 557.79 L699.72 559.40 L701.28 561.02 L702.84 562.64 L704.41 564.25 L705.98 565.86 L707.56 567.47 L709.14 569.07 L710.72 570.68 L712.30 572.28 L713.89 573.87 L715.48 575.47 L717.08 577.06 L718.67 578.65 L720.27 580.23 L721.87 581.81 L723.48 583.39 L725.09 584.96 L726.70 586.53 L728.31 588.10 L729.92 589.66 L731.53 591.22 L733.15 592.77 L734.77 594.32 L736.39 595.87 L738.01 597.41 L739.63 598.94 L741.26 600.48 L742.88 602.00 L744.51 603.52 L746.13 605.04 L747.76 606.55 L749.39 608.06 L751.01 609.56 L752.64 611.05 L754.27 612.54 L755.90 614.03 L757.52 615.51 L759.15 616.98 L760.78 618.44 L762.40 619.91 L764.03 621.36 L765.65 622.81 L767.28 624.25 L768.90 625.69 L770.52 627.12 L772.14 628.54 L773.76 629.95 L775.38 631.36 L777.00 632.77 L778.61 634.16 L780.22 635.55 L781.83 636.93 L783.44 638.31 L785.04 639.68 L786.65 641.04 L788.25 642.39 L789.84 643.73 L791.44 645.07 L793.03 646.40 L794.62 647.72 L796.20 649.04 L797.79 650.35 L799.36 651.64 L800.94 652.93 L802.51 654.22 L804.08 655.49 L805.64 656.76 L807.20 658.02 L808.76 659.27 L810.31 660.51 L811.85 661.74 L813.40 662.96 L814.93 664.18 L816.47 665.39 L817.99 666.58 L819.52 667.77 L821.03 668.95 L822.55 670.12 L824.05 671.28 L825.55 672.44 L827.05 673.58 L828.54 674.71 L830.02 675.84 L831.50 676.95 L832.98 678.06 L834.44 679.15 L835.90 680.24 L837.36 681.32 L838.80 682.38 L840.25 683.44 L841.68 684.49 L843.11 685.52 L844.53 686.55 L845.94 687.57 L847.35 688.57 L848.75 689.57 L850.15 690.55 L851.53 691.53 L852.91 692.49 L854.28 693.45 L855.65 694.39 L857.00 695.32 L858.35 696.24 L859.70 697.16 L861.03 698.06 L862.36 698.94 L863.67 699.82 L864.98 700.69 L866.29 701.55 L867.58 702.39 L868.87 703.22 L870.15 704.05 L871.42 704.86 L872.68 705.66 L873.93 706.44 L875.18 707.22 L876.41 707.98 L877.64 708.74 L878.86 709.48 L880.07 710.21 L881.28 710.92 L882.47 711.63 L883.66 712.32 L884.83 713.00 L886.00 713.67 L887.16 714.32 L888.31 714.97 L889.45 715.60 L890.59 716.22 L891.71 716.82 L892.83 717.42 L893.94 718.00 L895.03 718.57 L896.12 719.12 L897.20 719.67 L898.28 720.20 L899.34 720.71 L900.39 721.22 L901.44 721.71 L902.47 722.18 L903.50 722.65 L904.52 723.10 L905.53 723.54 L906.53 723.96 L907.52 724.37 L908.50 724.77 L909.48 725.15 L910.44 725.52 L911.40 725.88 L912.35 726.22 L913.29 726.55 L914.22 726.86 L915.14 727.16 L916.06 727.45 L916.96 727.72 L917.86 727.98 L918.74 728.22 L919.62 728.45 L920.50 728.67 L921.36 728.87 L922.21 729.06 L923.06 729.23 L923.90 729.39 L924.73 729.53 L925.55 729.66 L926.36 729.77 L927.16 729.87 L927.96 729.95 L928.75 730.02 L929.53 730.08 L930.31 730.12 L931.07 730.14 L931.83 730.15 L932.58 730.14 L933.32 730.12 L934.06 730.09 L934.78 730.04 L935.50 729.97 L936.22 729.89 L936.92 729.79 L937.62 729.68 L938.31 729.55 L939.00 729.41 L939.67 729.25 L940.34 729.07 L941.01 728.88 L941.66 728.68 L942.31 728.45 L942.96 728.22 L943.59 727.96 L944.22 727.70 L944.85 727.41 L945.46 727.11 L946.07 726.79 L946.68 726.46 L947.28 726.11 L947.87 725.75 L948.46 725.37 L949.04 724.97 L949.61 724.56 L950.18 724.13 L950.75 723.69 L951.30 723.23 L951.86 722.75 L952.40 722.26 L952.94 721.75 L953.48 721.23 L954.01 720.69 L954.54 720.13 L955.06 719.56 L955.58 718.97 L956.09 718.36 L956.59 717.74 L957.10 717.11 L957.59 716.45 L958.09 715.78 L958.57 715.10 L959.06 714.40 L959.54 713.68 L960.01 712.94 L960.48 712.19 L960.95 711.43 L961.41 710.64 L961.87 709.84 L962.32 709.03 L962.77 708.20 L963.22 707.35 L963.66 706.49 L964.10 705.61 L964.54 704.72 L964.97 703.80 L965.40 702.88 L965.82 701.94 L966.24 700.98 L966.66 700.00 L967.08 699.01 L967.49 698.01 L967.90 696.98 L968.30 695.95 L968.70 694.89 L969.10 693.82 L969.50 692.74 L969.89 691.64 L970.28 690.53 L970.67 689.39 L971.05 688.25 L971.44 687.09 L971.81 685.91 L972.19 684.72 L972.56 683.51 L972.94 682.29 L973.30 681.05 L973.67 679.80 L974.03 678.53 L974.39 677.25 L974.75 675.95 L975.11 674.64 L975.46 673.31 L975.81 671.97 L976.16 670.61 L976.51 669.24 L976.85 667.86 L977.19 666.46 L977.53 665.04 L977.87 663.62 L978.20 662.17 L978.54 660.72 L978.87 659.25 L979.20 657.76 L979.52 656.27 L979.85 654.75 L980.17 653.23 L980.49 651.69 L980.80 650.14 L981.12 648.57 L981.43 646.99 L981.74 645.40 L982.05 643.80 L982.35 642.18 L982.66 640.55 L982.96 638.91 L983.26 637.25 L983.56 635.58 L983.85 633.90 L984.14 632.21 L984.43 630.50 L984.72 628.78 L985.01 627.05 L985.29 625.31 L985.57 623.56 L985.85 621.79 L986.13 620.01 L986.40 618.23 L986.67 616.43 L986.94 614.62 L987.21 612.79 L987.47 610.96 L987.73 609.12 L987.99 607.26 L988.25 605.40 L988.50 603.52 L988.75 601.64 L989.00 599.74 L989.25 597.83 L989.49 595.92 L989.73 593.99 L989.97 592.06 L990.20 590.11 L990.43 588.15 L990.66 586.19 L990.89 584.22 L991.11 582.23 L991.33 580.24 L991.55 578.24 L991.77 576.23 L991.98 574.22 L992.19 572.19 L992.39 570.16 L992.59 568.12 L992.79 566.07 L992.99 564.01 L993.18 561.94 L993.37 559.87 L993.56 557.79 L993.74 555.70 L993.92 553.61 L994.09 551.51 L994.27 549.40 L994.43 547.28 L994.60 545.16 L994.76 543.03 L994.92 540.90 L995.08 538.76 L995.23 536.62 L995.37 534.46 L995.52 532.31 L995.66 530.15 L995.80 527.98 L995.93 525.81 L996.06 523.63 L996.18 521.45 L996.30 519.26 L996.42 517.07 L996.53 514.87 L996.64 512.67 L996.75 510.47 L996.85 508.26 L996.95 506.05 L997.04 503.83 L997.13 501.61 L997.22 499.39 L997.30 497.17 L997.38 494.94 L997.45 492.71 L997.52 490.48 L997.59 488.24 L997.65 486.00 L997.70 483.76 L997.76 481.52 L997.80 479.28 L997.85 477.03 L997.89 474.79 L997.92 472.54 L997.96 470.29 L997.98 468.04 L998.01 465.79 L998.03 463.54 L998.04 461.29 L998.05 459.03 L998.06 456.78 L998.06 454.53 L998.06 452.28 L998.05 450.02 L998.04 447.77 L998.03 445.52 L998.01 443.27 L997.98 441.02 L997.96 438.77 L997.92 436.53 L997.89 434.28 L997.85 432.04 L997.80 429.80 L997.75 427.56 L997.70 425.32 L997.64 423.08 L997.58 420.85 L997.52 418.62 L997.45 416.39 L997.38 414.17 L997.30 411.94 L997.22 409.73 L997.13 407.51 L997.04 405.30 L996.95 403.09 L996.85 400.89 L996.75 398.68 L996.64 396.49 L996.53 394.30 L996.42 392.11 L996.30 389.93 L996.18 387.75 L996.06 385.58 L995.93 383.41 L995.80 381.24 L995.66 379.09 L995.52 376.94 L995.38 374.79 L995.23 372.65 L995.08 370.51 L994.93 368.39 L994.77 366.26 L994.61 364.15 L994.44 362.04 L994.27 359.94 L994.10 357.84 L993.93 355.76 L993.75 353.67 L993.57 351.60 L993.38 349.54 L993.19 347.48 L993.00 345.43 L992.81 343.38 L992.61 341.35 L992.41 339.32 L992.21 337.30 L992.00 335.29 L991.79 333.29 L991.58 331.30 L991.36 329.32 L991.14 327.34 L990.92 325.38 L990.69 323.42 L990.47 321.48 L990.24 319.54 L990.00 317.61 L989.77 315.70 L989.53 313.79 L989.29 311.89 L989.04 310.00 L988.79 308.13 L988.55 306.26 L988.29 304.41 L988.04 302.56 L987.78 300.73 L987.52 298.91 L987.26 297.09 L986.99 295.29 L986.73 293.50 L986.46 291.73 L986.19 289.96 L985.91 288.20 L985.63 286.46 L985.36 284.73 L985.07 283.01 L984.79 281.31 L984.50 279.61 L984.22 277.93 L983.92 276.26 L983.63 274.60 L983.34 272.96 L983.04 271.33 L982.74 269.71 L982.44 268.10 L982.13 266.51 L981.83 264.93 L981.52 263.36 L981.21 261.81 L980.89 260.27 L980.58 258.74 L980.26 257.23 L979.94 255.73 L979.61 254.24 L979.29 252.77 L978.96 251.32 L978.63 249.87 L978.30 248.44 L977.97 247.03 L977.63 245.63 L977.29 244.24 L976.95 242.87 L976.61 241.51 L976.26 240.17 L975.91 238.84 L975.56 237.53 L975.21 236.23 L974.85 234.95 L974.49 233.68 L974.13 232.42 L973.77 231.18 L973.40 229.96 L973.03 228.75 L972.66 227.56 L972.28 226.38 L971.91 225.22 L971.53 224.07 L971.14 222.94 L970.76 221.82 L970.37 220.72 L969.98 219.63 L969.58 218.56 L969.18 217.51 L968.78 216.47 L968.38 215.44 L967.97 214.44 L967.56 213.44 L967.14 212.47 L966.73 211.51 L966.30 210.56 L965.88 209.64 L965.45 208.72 L965.02 207.83 L964.58 206.95 L964.14 206.08 L963.70 205.23 L963.25 204.40 L962.80 203.58 L962.35 202.78 L961.89 202.00 L961.42 201.23 L960.96 200.48 L960.48 199.74 L960.01 199.02 L959.53 198.32 L959.04 197.63 L958.55 196.96 L958.06 196.31 L957.56 195.67 L957.05 195.04 L956.54 194.44 L956.03 193.85 L955.51 193.27 L954.99 192.71 L954.46 192.17 L953.92 191.64 L953.38 191.13 L952.84 190.64 L952.29 190.16 L951.73 189.70 L951.17 189.25 L950.60 188.82 L950.03 188.41 L949.45 188.01 L948.86 187.63 L948.27 187.26 L947.67 186.91 L947.07 186.58 L946.46 186.26 L945.84 185.96 L945.22 185.67 L944.59 185.40 L943.96 185.14 L943.32 184.90 L942.67 184.68 L942.01 184.47 L941.35 184.28 L940.68 184.10 L940.00 183.94 L939.32 183.79 L938.63 183.66 L937.93 183.55 L937.22 183.45 L936.51 183.36 L935.79 183.29 L935.07 183.24 L934.33 183.20 L933.59 183.18 L932.84 183.17 L932.08 183.17 L931.31 183.20 L930.54 183.23 L929.76 183.28 L928.97 183.35 L928.17 183.43 L927.37 183.53 L926.55 183.64 L925.73 183.76 L924.90 183.90 L924.06 184.06 L923.22 184.23 L922.36 184.41 L921.50 184.61 L920.63 184.82 L919.75 185.05 L918.86 185.29 L917.96 185.54 L917.05 185.81 L916.14 186.09 L915.22 186.39 L914.28 186.70 L913.34 187.03 L912.39 187.37 L911.44 187.72 L910.47 188.08 L909.49 188.46 L908.51 188.86 L907.52 189.26 L906.51 189.69 L905.50 190.12 L904.48 190.57 L903.45 191.03 L902.41 191.50 L901.37 191.99 L900.31 192.49 L899.25 193.00 L898.17 193.52 L897.09 194.06 L896.00 194.62 L894.90 195.18 L893.79 195.76 L892.67 196.35 L891.55 196.95 L890.41 197.56 L889.27 198.19 L888.11 198.83 L886.95 199.48 L885.78 200.14 L884.60 200.82 L883.41 201.51 L882.21 202.21 L881.01 202.92 L879.80 203.65 L878.57 204.38 L877.34 205.13 L876.10 205.89 L874.85 206.66 L873.60 207.44 L872.33 208.24 L871.06 209.04 L869.78 209.86 L868.49 210.69 L867.19 211.53 L865.88 212.38 L864.57 213.24 L863.25 214.12 L861.92 215.00 L860.58 215.90 L859.24 216.80 L857.89 217.72 L856.52 218.65 L855.16 219.59 L853.78 220.54 L852.40 221.49 L851.01 222.46 L849.61 223.44 L848.21 224.44 L846.80 225.44 L845.38 226.45 L843.95 227.47 L842.52 228.50 L841.08 229.54 L839.64 230.59 L838.19 231.65 L836.73 232.73 L835.26 233.81 L833.79 234.90 L832.32 236.00 L830.83 237.11 L829.34 238.22 L827.85 239.35 L826.35 240.49 L824.84 241.64 L823.33 242.79 L821.82 243.96 L820.29 245.13 L818.77 246.32 L817.24 247.51 L815.70 248.71 L814.16 249.92 L812.61 251.14 L811.06 252.36 L809.50 253.60 L807.94 254.84 L806.38 256.09 L804.81 257.36 L803.24 258.62 L801.66 259.90 L800.08 261.19 L798.50 262.48 L796.91 263.78 L795.32 265.09 L793.73 266.40 L792.13 267.73 L790.53 269.06 L788.93 270.40 L787.33 271.75 L785.72 273.10 L784.11 274.46 L782.50 275.83 L780.88 277.21 L779.26 278.59 L777.65 279.98 L776.02 281.38 L774.40 282.78 L772.78 284.19 L771.15 285.61 L769.53 287.03 L767.90 288.46 L766.27 289.90 L764.64 291.34 L763.01 292.79 L761.38 294.24 L759.74 295.70 L758.11 297.17 L756.48 298.64 L754.84 300.12 L753.21 301.60 L751.58 303.09 L749.95 304.59 L748.31 306.09 L746.68 307.59 L745.05 309.10 L743.42 310.62 L741.79 312.14 L740.16 313.66 L738.53 315.19 L736.90 316.73 L735.28 318.27 L733.66 319.81 L732.03 321.36 L730.41 322.91 L728.79 324.47 L727.18 326.03 L725.56 327.59 L723.95 329.16 L722.34 330.73 L720.73 332.31 L719.12 333.89 L717.52 335.47 L715.92 337.05 L714.32 338.64 L712.73 340.23 L711.14 341.83 L709.55 343.42 L707.97 345.02 L706.39 346.63 L704.81 348.23 L703.23 349.84 L701.66 351.45 L700.10 353.06 L698.54 354.67 L696.98 356.29 L695.42 357.90 L693.87 359.52 L692.33 361.14 L690.79 362.76 L689.25 364.38 L687.72 366.01 L686.20 367.63 L684.67 369.26 L683.16 370.88 L681.65 372.51 L680.14 374.14 L678.64 375.76 L677.14 377.39 L675.65 379.02 L674.17 380.65 L672.69 382.27 L671.22 383.90 L669.75 385.53 L668.29 387.15 L666.84 388.78 L665.39 390.40 L663.95 392.03 L662.51 393.65 L661.08 395.27 L659.66 396.89 L658.24 398.51 L656.83 400.13 L655.43 401.75 L654.03 403.36 L652.65 404.97 L651.26 406.58 L649.89 408.19 L648.52 409.79 L647.16 411.40 L645.81 413.00 L644.46 414.59 L643.13 416.19 L641.80 417.78 L640.47 419.37 L639.16 420.95 L637.85 422.54 L636.55 424.11 L635.26 425.69 L633.98 427.26 L632.71 428.83 L631.44 430.39 L630.18 431.95 L628.93 433.51 L627.69 435.06 L626.46 436.60 L625.23 438.15 L624.02 439.68 L622.81 441.22 L621.61 442.74 L620.43 444.27 L619.25 445.78 L618.08 447.30 L616.91 448.80 L615.76 450.30 L614.62 451.80 L613.48 453.29 L612.36 454.77 L611.25 456.25 L610.14 457.73 L609.04 459.19 L607.96 460.65 L606.88 462.11 L605.82 463.55 L604.76 465.00 L603.71 466.43 L602.68 467.86 L601.65 469.28 L600.63 470.69 L599.63 472.10 L598.63 473.50 L597.64 474.90 L596.67 476.28 L595.71 477.66 L594.75 479.03 L593.81 480.40 L592.87 481.75 L591.95 483.10 L591.04 484.45 L590.14 485.78 L589.25 487.11 L588.37 488.42 L587.51 489.73 L586.65 491.04 L585.81 492.33 L584.97 493.62 L584.15 494.90 L583.34 496.17 L582.54 497.43 L581.75 498.68 L580.98 499.93 L580.21 501.16 L579.46 502.39 L578.72 503.61 L577.99 504.82 L577.28 506.03 L576.57 507.22 L575.88 508.41 L575.20 509.58 L574.53 510.75 L573.87 511.91 L573.23 513.06 L572.60 514.21 L571.98 515.34 L571.37 516.46 L570.78 517.58 L570.20 518.69 L569.63 519.78 L569.07 520.87 L568.53 521.95 L568.00 523.03 L567.48 524.09 L566.98 525.14 L566.49 526.19 L566.01 527.22 L565.55 528.25 L565.10 529.27 L564.66 530.28 L564.24 531.28 L563.83 532.27 L563.43 533.25 L563.05 534.23 L562.68 535.19 L562.32 536.15 L561.98 537.10 L561.65 538.04 L561.34 538.97 L561.03 539.89 L560.75 540.81 L560.48 541.71 L560.22 542.61 L559.97 543.50 L559.74 544.37 L559.53 545.25 L559.33 546.11 L559.14 546.96 L558.97 547.81 L558.81 548.65 L558.67 549.48 L558.54 550.30 L558.43 551.11 L558.33 551.92 L558.24 552.71 L558.17 553.50 L558.12 554.28 L558.08 555.06 L558.06 555.82 L558.05 556.58 L558.05 557.33 L558.07 558.07 L558.11 558.81 L558.16 559.53 L558.23 560.25 L558.31 560.97 L558.41 561.67 L558.52 562.37 L558.65 563.06 L558.79 563.75 L558.95 564.42 L559.13 565.09 L559.32 565.76 L559.52 566.41 L559.74 567.06 L559.98 567.71 L560.23 568.34 L560.50 568.97 L560.79 569.60 L561.09 570.21 L561.40 570.82 L561.74 571.43 L562.08 572.03 L562.45 572.62 L562.83 573.21 L563.22 573.79 L563.64 574.36 L564.06 574.93 L564.51 575.50 L564.97 576.05 L565.44 576.61 L565.94 577.15 L566.44 577.70 L566.97 578.23 L567.51 578.76 L568.07 579.29 L568.64 579.81 L569.23 580.33 L569.83 580.84 L570.45 581.34 L571.09 581.85 L571.74 582.34 L572.41 582.84 L573.10 583.32 L573.80 583.81 L574.52 584.29 L575.25 584.76 L576.00 585.23 L576.77 585.70 L577.55 586.16 L578.35 586.62 L579.17 587.07 L580.00 587.52 L580.85 587.97 L581.71 588.41 L582.59 588.85 L583.48 589.29 L584.39 589.72 L585.32 590.15 L586.26 590.57 L587.22 590.99 L588.20 591.41 L589.19 591.83 L590.19 592.24 L591.21 592.65 L592.25 593.05 L593.30 593.45 L594.37 593.85 L595.46 594.25 L596.56 594.64 L597.67 595.03 L598.80 595.42 L599.95 595.80 L601.11 596.19 L602.29 596.56 L603.48 596.94 L604.69 597.31 L605.91 597.69 L607.15 598.05 L608.40 598.42 L609.67 598.78 L610.95 599.14 L612.25 599.50 L613.56 599.86 L614.89 600.21 L616.23 600.56 L617.59 600.91 L618.96 601.26 L620.34 601.60 L621.74 601.94 L623.15 602.28 L624.58 602.62 L626.02 602.96 L627.48 603.29 L628.95 603.62 L630.43 603.95 L631.93 604.27 L633.44 604.60 L634.97 604.92 L636.51 605.24 L638.06 605.55 L639.62 605.87 L641.20 606.18 L642.80 606.49 L644.40 606.80 L646.02 607.11 L647.65 607.41 L649.29 607.71 L650.95 608.01 L652.62 608.31 L654.30 608.60 L655.99 608.89 L657.70 609.18 L659.42 609.47 L661.15 609.76 L662.89 610.04 L664.64 610.32 L666.41 610.60 L668.18 610.88 L669.97 611.15 L671.77 611.42 L673.58 611.69 L675.40 611.96 L677.24 612.22 L679.08 612.48 L680.93 612.74 L682.80 613.00 L684.68 613.25 L686.56 613.50 L688.46 613.75 L690.36 614.00 L692.28 614.24 L694.21 614.48 L696.14 614.72 L698.09 614.95 L700.04 615.18 L702.01 615.41 L703.98 615.64 L705.96 615.86 L707.95 616.08 L709.95 616.30 L711.96 616.52 L713.98 616.73 L716.01 616.94 L718.04 617.14 L720.08 617.34 L722.13 617.54 L724.19 617.74 L726.25 617.93 L728.33 618.12 L730.41 618.31 L732.50 618.49 L734.59 618.67 L736.69 618.84 L738.80 619.02 L740.91 619.18 L743.03 619.35 L745.16 619.51 L747.30 619.67 L749.44 619.83 L751.58 619.98 L753.73 620.12 L755.89 620.27 L758.05 620.41 L760.22 620.55 L762.39 620.68 L764.57 620.81 L766.75 620.93 L768.94 621.05 L771.13 621.17 L773.33 621.28 L775.53 621.39 L777.73 621.50 L779.94 621.60 L782.15 621.70 L784.36 621.79 L786.58 621.88 L788.81 621.97 L791.03 622.05 L793.26 622.13 L795.49 622.20 L797.72 622.27 L799.96 622.34 L802.19 622.40 L804.43 622.45 L806.68 622.51 L808.92 622.55 L811.16 622.60 L813.41 622.64 L815.66 622.68 L817.91 622.71 L820.16 622.73 L822.41 622.76 L824.66 622.78 L826.91 622.79 L829.16 622.80 L831.42 622.81 L833.67 622.81 L835.92 622.81 L838.17 622.80 L840.43 622.79 L842.68 622.78 L844.93 622.76 L847.18 622.73 L849.42 622.71 L851.67 622.67 L853.92 622.64 L856.16 622.60 L858.40 622.55 L860.64 622.50 L862.88 622.45 L865.11 622.39 L867.35 622.33 L869.58 622.27 L871.81 622.20 L874.03 622.13 L876.25 622.05 L878.47 621.97 L880.69 621.88 L882.90 621.79 L885.11 621.70 L887.31 621.60 L889.51 621.50 L891.71 621.39 L893.90 621.28 L896.09 621.17 L898.27 621.05 L900.45 620.93 L902.62 620.81 L904.79 620.68 L906.95 620.55 L909.11 620.41 L911.26 620.27 L913.41 620.13 L915.55 619.98 L917.68 619.83 L919.81 619.68 L921.93 619.52 L924.05 619.36 L926.16 619.19 L928.26 619.02 L930.35 618.85 L932.44 618.68 L934.52 618.50 L936.60 618.32 L938.66 618.13 L940.72 617.94 L942.77 617.75 L944.81 617.56 L946.85 617.36 L948.87 617.16 L950.89 616.96 L952.90 616.75 L954.90 616.54 L956.90 616.33 L958.88 616.11 L960.85 615.89 L962.82 615.67 L964.77 615.44 L966.72 615.22 L968.66 614.99 L970.58 614.75 L972.50 614.52 L974.41 614.28 L976.31 614.04 L978.19 613.79 L980.07 613.54 L981.94 613.30 L983.79 613.04 L985.64 612.79 L987.47 612.53 L989.29 612.27 L991.10 612.01 L992.90 611.75 L994.69 611.48 L996.47 611.21 L998.24 610.94 L999.99 610.66 L1001.74 610.39 L1003.47 610.11 L1005.19 609.82 L1006.89 609.54 L1008.59 609.25 L1010.27 608.97 L1011.94 608.68 L1013.60 608.38 L1015.24 608.09 L1016.87 607.79 L1018.49 607.49 L1020.10 607.19 L1021.69 606.88 L1023.27 606.58 L1024.84 606.27 L1026.39 605.96 L1027.93 605.64 L1029.46 605.33 L1030.97 605.01 L1032.47 604.69 L1033.95 604.36 L1035.42 604.04 L1036.88 603.71 L1038.32 603.38 L1039.75 603.05 L1041.17 602.72 L1042.57 602.38 L1043.96 602.04 L1045.33 601.70 L1046.69 601.36 L1048.03 601.01 L1049.36 600.66 L1050.67 600.31 L1051.97 599.96 L1053.25 599.60 L1054.52 599.24 L1055.78 598.88 L1057.01 598.52 L1058.24 598.15 L1059.45 597.78 L1060.64 597.41 L1061.82 597.04 L1062.98 596.66 L1064.13 596.28 L1065.26 595.89 L1066.38 595.51 L1067.48 595.12 L1068.57 594.73 L1069.64 594.33 L1070.69 593.93 L1071.73 593.53 L1072.75 593.13 L1073.76 592.72 L1074.75 592.31 L1075.73 591.89 L1076.69 591.48 L1077.63 591.05 L1078.56 590.63 L1079.47 590.20 L1080.37 589.77 L1081.25 589.33 L1082.12 588.89 L1082.96 588.45 L1083.80 588.00 L1084.61 587.55 L1085.41 587.10 L1086.20 586.64 L1086.97 586.17 L1087.72 585.71 L1088.45 585.23 L1089.17 584.76 L1089.88 584.28 L1090.56 583.79 L1091.24 583.30 L1091.89 582.81 L1092.53 582.31 L1093.15 581.80 L1093.76 581.29 L1094.35 580.78 L1094.93 580.26 L1095.49 579.74 L1096.03 579.21 L1096.55 578.67 L1097.06 578.13 L1097.56 577.59 L1098.04 577.04 L1098.50 576.48 L1098.94 575.92 L1099.37 575.35 L1099.79 574.78 L1100.19 574.20 L1100.57 573.61 L1100.94 573.02 L1101.29 572.42 L1101.62 571.82 L1101.94 571.21 L1102.24 570.59 L1102.53 569.97 L1102.80 569.34 L1103.05 568.71 L1103.29 568.07 L1103.52 567.42 L1103.73 566.76 L1103.92 566.10 L1104.10 565.43 L1104.26 564.75 L1104.40 564.07 L1104.54 563.38 L1104.65 562.68 L1104.75 561.98 L1104.83 561.26 L1104.90 560.54 L1104.96 559.82 L1105.00 559.08 L1105.02 558.34 L1105.03 557.59 L1105.02 556.83 L1105.00 556.06 L1104.96 555.29 L1104.91 554.51 L1104.85 553.72 L1104.77 552.92 L1104.67 552.12 L1104.56 551.30 L1104.43 550.48 L1104.29 549.65 L1104.14 548.81 L1103.97 547.97 L1103.79 547.11 L1103.59 546.25 L1103.38 545.38 L1103.15 544.50 L1102.91 543.61 L1102.65 542.71 L1102.39 541.80 L1102.10 540.89 L1101.81 539.97 L1101.49 539.03 L1101.17 538.09 L1100.83 537.14 L1100.48 536.19 L1100.11 535.22 L1099.73 534.24 L1099.34 533.26 L1098.93 532.27 L1098.51 531.26 L1098.08 530.25 L1097.63 529.23 L1097.17 528.20 L1096.70 527.17 L1096.21 526.12 L1095.71 525.06 L1095.20 524.00 L1094.67 522.92 L1094.13 521.84 L1093.58 520.75 L1093.02 519.65 L1092.44 518.54 L1091.85 517.42 L1091.25 516.30 L1090.63 515.16 L1090.01 514.02 L1089.37 512.86 L1088.72 511.70 L1088.05 510.53 L1087.38 509.35 L1086.69 508.16 L1085.99 506.96 L1085.28 505.76 L1084.55 504.55 L1083.81 503.32 L1083.07 502.09 L1082.31 500.85 L1081.54 499.60 L1080.75 498.35 L1079.96 497.08 L1079.15 495.81 L1078.34 494.53 L1077.51 493.24 L1076.67 491.94 L1075.82 490.64 L1074.95 489.32 L1074.08 488.00 L1073.20 486.67 L1072.30 485.33 L1071.39 483.99 L1070.48 482.64 L1069.55 481.27 L1068.61 479.91 L1067.66 478.53 L1066.70 477.15 L1065.73 475.76 L1064.75 474.36 L1063.76 472.96 L1062.76 471.55 L1061.75 470.13 L1060.73 468.70 L1059.70 467.27 L1058.66 465.83 L1057.60 464.39 L1056.54 462.94 L1055.47 461.48 L1054.39 460.01 L1053.30 458.54 L1052.20 457.07 L1051.09 455.58 L1049.97 454.09 L1048.84 452.60 L1047.71 451.10 L1046.56 449.59 L1045.40 448.08 L1044.24 446.57 L1043.06 445.05 L1041.88 443.52 L1040.69 441.99 L1039.49 440.45 L1038.28 438.91 L1037.06 437.36 L1035.83 435.81 L1034.60 434.25 L1033.35 432.69 L1032.10 431.13 L1030.84 429.56 L1029.57 427.99 L1028.30 426.41 L1027.01 424.84 L1025.72 423.25 L1024.42 421.66 L1023.11 420.07 L1021.79 418.48 L1020.47 416.88 L1019.14 415.29 L1017.80 413.68 L1016.45 412.08 L1015.10 410.47 L1013.73 408.86 L1012.37 407.25 L1010.99 405.63 L1009.61 404.02 L1008.22 402.40 L1006.82 400.78 L1005.42 399.15 L1004.01 397.53 L1002.59 395.90 L1001.17 394.28 L999.74 392.65 L998.30 391.02 L996.86 389.39 L995.41 387.76 L993.96 386.13 L992.49 384.49 L991.03 382.86 L989.56 381.23 L988.08 379.59 L986.59 377.96 L985.10 376.33 L983.61 374.70 L982.11 373.06 L980.60 371.43 L979.09 369.80 L977.58 368.17 L976.06 366.54 L974.53 364.91 L973.00 363.28 L971.47 361.65 L969.93 360.03 L968.39 358.41 L966.84 356.78 L965.29 355.16 L963.73 353.54 L962.17 351.93 L960.61 350.31 L959.04 348.70 L957.47 347.09 L955.89 345.48 L954.31 343.87 L952.73 342.27 L951.14 340.67 L949.56 339.07 L947.97 337.48 L946.37 335.89 L944.77 334.30 L943.17 332.72 L941.57 331.14 L939.97 329.56 L938.36 327.98 L936.75 326.41 L935.14 324.85 L933.53 323.29 L931.91 321.73 L930.30 320.17 L928.68 318.62 L927.06 317.08 L925.44 315.54 L923.81 314.00 L922.19 312.47 L920.57 310.95 L918.94 309.42 L917.31 307.91 L915.69 306.40 L914.06 304.89 L912.43 303.39 L910.81 301.89 L909.18 300.40 L907.55 298.92 L905.92 297.44 L904.30 295.97 L902.67 294.50 L901.04 293.04 L899.42 291.59 L897.79 290.14 L896.17 288.70 L894.55 287.26 L892.92 285.83 L891.30 284.41 L889.68 282.99 L888.07 281.58 L886.45 280.18 L884.84 278.78 L883.23 277.40 L881.62 276.01 L880.01 274.64 L878.40 273.27 L876.80 271.91 L875.20 270.56 L873.60 269.21 L872.01 267.88 L870.42 266.55 L868.83 265.22 L867.24 263.91 L865.66 262.60 L864.08 261.30 L862.51 260.01 L860.94 258.73 L859.37 257.46 L857.81 256.19 L856.25 254.93 L854.69 253.68 L853.14 252.44 L851.59 251.21 L850.05 249.98 L848.51 248.77 L846.98 247.56 L845.45 246.36 L843.93 245.18 L842.41 244.00 L840.90 242.83 L839.39 241.66 L837.89 240.51 L836.40 239.37 L834.91 238.23 L833.42 237.11 L831.94 236.00 L830.47 234.89 L829.01 233.79 L827.54 232.71 L826.09 231.63 L824.64 230.57 L823.20 229.51 L821.77 228.46 L820.34 227.43 L818.92 226.40 L817.50 225.38 L816.10 224.38 L814.69 223.38 L813.30 222.39 L811.91 221.42 L810.54 220.46 L809.16 219.50 L807.80 218.56 L806.44 217.63 L805.09 216.70 L803.75 215.79 L802.42 214.89 L801.09 214.00 L799.77 213.12 L798.46 212.26 L797.16 211.40 L795.87 210.56 L794.58 209.72 L793.30 208.90 L792.03 208.09 L790.77 207.29 L789.52 206.50 L788.27 205.73 L787.03 204.96 L785.80 204.21 L784.58 203.47 L783.37 202.74 L782.17 202.03 L780.98 201.32 L779.79 200.63 L778.61 199.95 L777.45 199.28 L776.29 198.62 L775.13 197.98 L773.99 197.35 L772.86 196.73 L771.73 196.12 L770.62 195.53 L769.51 194.95 L768.41 194.38 L767.32 193.82 L766.24 193.28 L765.17 192.75 L764.11 192.24 L763.06 191.73 L762.01 191.24 L760.97 190.76 L759.95 190.30 L758.93 189.85 L757.92 189.41 L756.92 188.99 L755.93 188.58 L754.94 188.18 L753.97 187.80 L753.00 187.43 L752.05 187.07 L751.10 186.73 L750.16 186.40 L749.23 186.09 L748.31 185.78 L747.39 185.50 L746.49 185.23 L745.59 184.97 L744.70 184.72 L743.82 184.49 L742.95 184.28 L742.09 184.08 L741.23 183.89 L740.39 183.72 L739.55 183.56 L738.72 183.42 L737.90 183.29 L737.09 183.18 L736.28 183.08 L735.49 182.99 L734.70 182.92 L733.91 182.87 L733.14 182.83 L732.38 182.81 L731.62 182.80 L730.87 182.80 L730.13 182.82 L729.39 182.86 L728.66 182.91 L727.94 182.98 L727.23 183.06 L726.52 183.16 L725.83 183.27 L725.14 183.40 L724.45 183.54 L723.77 183.70 L723.10 183.88 L722.44 184.07 L721.78 184.27 L721.13 184.49 L720.49 184.73 L719.85 184.98 L719.22 185.25 L718.60 185.54 L717.98 185.84 L717.37 186.15 L716.77 186.49 L716.17 186.83 L715.58 187.20 L714.99 187.58 L714.41 187.97 L713.83 188.39 L713.27 188.81 L712.70 189.26 L712.14 189.72 L711.59 190.19 L711.04 190.69 L710.50 191.19 L709.97 191.72 L709.43 192.26 L708.91 192.82 L708.39 193.39 L707.87 193.98 L707.36 194.58 L706.85 195.20 L706.35 195.84 L705.85 196.50 L705.36 197.16 L704.87 197.85 L704.39 198.55 L703.91 199.27 L703.44 200.00 L702.97 200.76 L702.50 201.52 L702.04 202.30 L701.58 203.10 L701.12 203.92 L700.67 204.75 L700.23 205.60 L699.79 206.46 L699.35 207.34 L698.91 208.23 L698.48 209.14 L698.05 210.07 L697.63 211.01 L697.20 211.97 L696.79 212.95 L696.37 213.94 L695.96 214.94 L695.55 215.96 L695.15 217.00 L694.74 218.05 L694.34 219.12 L693.95 220.21 L693.56 221.31 L693.17 222.42 L692.78 223.55 L692.39 224.70 L692.01 225.86 L691.63 227.04 L691.26 228.23 L690.88 229.44 L690.51 230.66 L690.14 231.90 L689.78 233.15 L689.41 234.42 L689.05 235.70 L688.69 237.00 L688.34 238.31 L687.99 239.64 L687.63 240.98 L687.29 242.34 L686.94 243.71 L686.60 245.09 L686.25 246.49 L685.91 247.90 L685.58 249.33 L685.24 250.77 L684.91 252.23 L684.58 253.70 L684.25 255.18 L683.93 256.68 L683.60 258.19 L683.28 259.72 L682.96 261.26 L682.64 262.81 L682.33 264.38 L682.02 265.95 L681.71 267.55 L681.40 269.15 L681.09 270.77 L680.79 272.40 L680.49 274.04 L680.19 275.70 L679.89 277.37 L679.60 279.05 L679.30 280.74 L679.01 282.45 L678.73 284.17 L678.44 285.90 L678.16 287.64 L677.88 289.39 L677.60 291.16 L677.32 292.93 L677.05 294.72 L676.78 296.52 L676.51 298.33 L676.24 300.15 L675.98 301.99 L675.72 303.83 L675.46 305.68 L675.20 307.55 L674.95 309.43 L674.70 311.31 L674.45 313.21 L674.20 315.11 L673.96 317.03 L673.72 318.96 L673.48 320.89 L673.25 322.84 L673.01 324.79 L672.78 326.76 L672.56 328.73 L672.33 330.71 L672.11 332.70 L671.90 334.70 L671.68 336.71 L671.47 338.73 L671.26 340.76 L671.06 342.79 L670.85 344.83 L670.66 346.88 L670.46 348.94 L670.27 351.00 L670.08 353.08 L669.89 355.16 L669.71 357.25 L669.53 359.34 L669.35 361.44 L669.18 363.55 L669.01 365.66 L668.85 367.79 L668.68 369.91 L668.53 372.05 L668.37 374.19 L668.22 376.33 L668.07 378.48 L667.93 380.64 L667.79 382.80 L667.65 384.97 L667.52 387.14 L667.39 389.32 L667.27 391.50 L667.14 393.69 L667.03 395.88 L666.91 398.08 L666.80 400.28 L666.70 402.48 L666.60 404.69 L666.50 406.90 L666.40 409.12 L666.31 411.33 L666.23 413.56 L666.15 415.78 L666.07 418.01 L666.00 420.24 L665.93 422.47 L665.86 424.71 L665.80 426.94 L665.74 429.18 L665.69 431.43 L665.64 433.67 L665.60 435.91 L665.56 438.16 L665.52 440.41 L665.49 442.66 L665.46 444.91 L665.44 447.16 L665.42 449.41 L665.41 451.66 L665.40 453.91 L665.39 456.17 L665.39 458.42 L665.39 460.67 L665.40 462.92 L665.41 465.18 L665.42 467.43 L665.44 469.68 L665.46 471.93 L665.49 474.17 L665.52 476.42 L665.56 478.67 L665.60 480.91 L665.64 483.15 L665.69 485.39 L665.75 487.63 L665.80 489.86 L665.86 492.10 L665.93 494.33 L666.00 496.56 L666.07 498.78 L666.15 501.00 L666.23 503.22 L666.32 505.44 L666.41 507.65 L666.50 509.86 L666.60 512.06 L666.70 514.26 L666.80 516.46 L666.91 518.65 L667.03 520.84 L667.14 523.02 L667.26 525.20 L667.39 527.37 L667.52 529.54 L667.65 531.70 L667.79 533.86 L667.93 536.01 L668.07 538.16 L668.22 540.30 L668.37 542.43 L668.52 544.56 L668.68 546.68 L668.84 548.80 L669.00 550.91 L669.17 553.01 L669.34 555.10 L669.52 557.19 L669.70 559.27 L669.88 561.35 L670.06 563.41 L670.25 565.47 L670.44 567.52 L670.64 569.56 L670.84 571.60 L671.04 573.63 L671.24 575.64 L671.45 577.65 L671.66 579.65 L671.87 581.65 L672.09 583.63 L672.31 585.60 L672.53 587.57 L672.75 589.52 L672.98 591.47 L673.21 593.41 L673.45 595.33 L673.68 597.25 L673.92 599.16 L674.16 601.06 L674.41 602.94 L674.65 604.82 L674.90 606.69 L675.15 608.54 L675.41 610.39 L675.67 612.22 L675.93 614.04 L676.19 615.85 L676.45 617.65 L676.72 619.44 L676.99 621.22 L677.26 622.99 L677.54 624.74 L677.81 626.49 L678.09 628.22 L678.37 629.94 L678.66 631.64 L678.94 633.34 L679.23 635.02 L679.52 636.69 L679.82 638.35 L680.11 639.99 L680.41 641.62 L680.71 643.24 L681.01 644.85 L681.31 646.44 L681.62 648.02 L681.93 649.59 L682.24 651.14 L682.56 652.68 L682.87 654.21 L683.19 655.72 L683.51 657.22 L683.83 658.70 L684.16 660.17 L684.48 661.63 L684.81 663.07 L685.15 664.50 L685.48 665.92 L685.82 667.32 L686.16 668.71 L686.50 670.08 L686.84 671.44 L687.19 672.78 L687.54 674.11 L687.89 675.42 L688.24 676.72 L688.60 678.00 L688.95 679.27 L689.32 680.53 L689.68 681.76 L690.05 682.99 L690.42 684.20 L690.79 685.39 L691.16 686.57 L691.54 687.73 L691.92 688.88 L692.30 690.01 L692.69 691.13 L693.08 692.23 L693.47 693.32 L693.87 694.39 L694.26 695.44 L694.67 696.48 L695.07 697.50 L695.48 698.51 L695.89 699.50 L696.30 700.48 L696.72 701.44 L697.14 702.38 L697.57 703.31 L698.00 704.22 L698.43 705.12 L698.86 706.00 L699.30 706.87 L699.75 707.71 L700.19 708.55 L700.65 709.36 L701.10 710.16 L701.56 710.95 L702.02 711.72 L702.49 712.47 L702.96 713.20 L703.44 713.92 L703.92 714.63 L704.41 715.32 L704.90 715.99 L705.39 716.64 L705.89 717.28 L706.39 717.90 L706.90 718.51 L707.42 719.10 L707.94 719.68 L708.46 720.24 L708.99 720.78 L709.52 721.30 L710.06 721.81 L710.61 722.31 L711.16 722.79 L711.72 723.25 L712.28 723.69 L712.85 724.13 L713.42 724.54 L714.00 724.94 L714.58 725.32 L715.18 725.69 L715.77 726.04 L716.38 726.37 L716.99 726.69 L717.60 726.99 L718.23 727.28 L718.85 727.55 L719.49 727.80 L720.13 728.04 L720.78 728.27 L721.44 728.48 L722.10 728.67 L722.77 728.85 L723.45 729.01 L724.13 729.15 L724.82 729.29 L725.52 729.40 L726.22 729.50 L726.93 729.59 L727.65 729.65 L728.38 729.71 L729.12 729.75 L729.86 729.77 L730.61 729.78 L731.37 729.77 L732.13 729.75 L732.91 729.72 L733.69 729.66 L734.48 729.60 L735.27 729.52 L736.08 729.42 L736.89 729.31 L737.72 729.18 L738.55 729.04 L739.38 728.89 L740.23 728.72 L741.09 728.54 L741.95 728.34 L742.82 728.13 L743.70 727.90 L744.59 727.66 L745.49 727.41 L746.39 727.14 L747.31 726.85 L748.23 726.56 L749.16 726.25 L750.10 725.92 L751.05 725.58 L752.01 725.23 L752.98 724.86 L753.95 724.48 L754.94 724.09 L755.93 723.68 L756.93 723.26 L757.95 722.83 L758.97 722.38 L759.99 721.92 L761.03 721.45 L762.08 720.96 L763.13 720.46 L764.20 719.95 L765.27 719.42 L766.36 718.88 L767.45 718.33 L768.55 717.77 L769.66 717.19 L770.77 716.60 L771.90 716.00 L773.04 715.39 L774.18 714.76 L775.33 714.12 L776.50 713.47 L777.67 712.80 L778.85 712.13 L780.04 711.44 L781.23 710.74 L782.44 710.03 L783.65 709.30 L784.87 708.56 L786.11 707.82 L787.35 707.06 L788.59 706.29 L789.85 705.50 L791.12 704.71 L792.39 703.90 L793.67 703.09 L794.96 702.26 L796.26 701.42 L797.56 700.57 L798.88 699.70 L800.20 698.83 L801.53 697.95 L802.86 697.05 L804.21 696.14 L805.56 695.23 L806.92 694.30 L808.29 693.36 L809.67 692.41 L811.05 691.45 L812.44 690.48 L813.84 689.50 L815.24 688.51 L816.65 687.51 L818.07 686.50 L819.49 685.48 L820.93 684.45 L822.36 683.41 L823.81 682.35 L825.26 681.29 L826.72 680.22 L828.18 679.14 L829.65 678.05 L831.13 676.95 L832.61 675.84 L834.10 674.72 L835.60 673.59 L837.10 672.46 L838.60 671.31 L840.11 670.15 L841.63 668.99 L843.15 667.82 L844.68 666.63 L846.21 665.44 L847.75 664.24 L849.29 663.03 L850.84 661.81 L852.39 660.58 L853.94 659.35 L855.50 658.11 L857.07 656.85 L858.63 655.59 L860.21 654.32 L861.78 653.05 L863.36 651.76 L864.95 650.47 L866.53 649.17 L868.12 647.86 L869.72 646.54 L871.31 645.22 L872.91 643.89 L874.51 642.55 L876.12 641.20 L877.73 639.85 L879.34 638.48 L880.95 637.12 L882.57 635.74 L884.18 634.36 L885.80 632.97 L887.42 631.57 L889.04 630.17 L890.67 628.76 L892.29 627.34 L893.92 625.92 L895.55 624.49 L897.18 623.05 L898.81 621.61 L900.44 620.16 L902.07 618.71 L903.70 617.24 L905.34 615.78 L906.97 614.31 L908.60 612.83 L910.24 611.34 L911.87 609.85 L913.50 608.36 L915.13 606.86 L916.77 605.35 L918.40 603.84 L920.03 602.33 L921.66 600.81 L923.29 599.28 L924.92 597.75 L926.54 596.22 L928.17 594.68 L929.79 593.14 L931.41 591.59 L933.04 590.04 L934.65 588.48 L936.27 586.92 L937.89 585.36 L939.50 583.79 L941.11 582.22 L942.72 580.64 L944.32 579.06 L945.93 577.48 L947.53 575.90 L949.12 574.31 L950.72 572.72 L952.31 571.12 L953.90 569.52 L955.48 567.92 L957.06 566.32 L958.64 564.72 L960.21 563.11 L961.78 561.50 L963.35 559.89 L964.91 558.28 L966.47 556.66 L968.02 555.05 L969.57 553.43 L971.12 551.81 L972.66 550.19 L974.19 548.56 L975.73 546.94 L977.25 545.32 L978.77 543.69 L980.29 542.07 L981.80 540.44 L983.31 538.81 L984.81 537.18 L986.30 535.56 L987.79 533.93 L989.28 532.30 L990.76 530.67 L992.23 529.05 L993.69 527.42 L995.16 525.79 L996.61 524.17 L998.06 522.54 L999.50 520.92 L1000.94 519.30 L1002.37 517.67 L1003.79 516.05 L1005.20 514.44 L1006.61 512.82 L1008.02 511.20 L1009.41 509.59 L1010.80 507.98 L1012.18 506.37 L1013.56 504.76 L1014.93 503.15 L1016.29 501.55 L1017.64 499.95 L1018.98 498.35 L1020.32 496.76 L1021.65 495.17 L1022.97 493.58 L1024.29 491.99 L1025.59 490.41 L1026.89 488.83 L1028.18 487.26 L1029.47 485.69 L1030.74 484.12 L1032.01 482.56 L1033.27 481.00 L1034.52 479.44 L1035.76 477.89 L1036.99 476.34 L1038.21 474.80 L1039.43 473.26 L1040.63 471.73 L1041.83 470.20 L1043.02 468.68 L1044.20 467.16 L1045.37 465.65 L1046.53 464.15 L1047.69 462.64 L1048.83 461.15 L1049.96 459.66 L1051.09 458.17 L1052.20 456.69 L1053.31 455.22 L1054.40 453.76 L1055.49 452.29 L1056.57 450.84 L1057.63 449.39 L1058.69 447.95 L1059.74 446.52 L1060.77 445.09 L1061.80 443.67 L1062.81 442.25 L1063.82 440.85 L1064.82 439.44 L1065.80 438.05 L1066.78 436.67 L1067.74 435.29 L1068.70 433.91 L1069.64 432.55 L1070.57 431.19 L1071.49 429.84 L1072.41 428.50 L1073.31 427.17 L1074.19 425.84 L1075.07 424.52 L1075.94 423.21 L1076.80 421.91 L1077.64 420.62 L1078.47 419.33 L1079.30 418.05 L1080.11 416.78 L1080.91 415.52 L1081.69 414.27 L1082.47 413.02 L1083.23 411.78 L1083.99 410.56 L1084.73 409.34 L1085.46 408.12 L1086.17 406.92 L1086.88 405.73 L1087.57 404.54 L1088.25 403.36 L1088.92 402.20 L1089.57 401.04 L1090.22 399.88 L1090.85 398.74 L1091.47 397.61 L1092.07 396.48 L1092.67 395.37 L1093.25 394.26 L1093.82 393.16 L1094.37 392.07 L1094.92 390.99 L1095.45 389.92 L1095.96 388.86 L1096.47 387.81 L1096.96 386.76 L1097.43 385.72 L1097.90 384.70 L1098.35 383.68 L1098.79 382.67 L1099.21 381.67 L1099.62 380.68 L1100.02 379.69 L1100.40 378.72 L1100.77 377.75 L1101.13 376.80 L1101.47 375.85 L1101.80 374.91 L1102.11 373.98 L1102.41 373.06 L1102.70 372.14 L1102.97 371.24 L1103.23 370.34 L1103.47 369.45 L1103.70 368.57 L1103.92 367.70 L1104.12 366.84 L1104.31 365.99 L1104.48 365.14 L1104.64 364.30 L1104.78 363.47 L1104.91 362.65 L1105.02 361.84 L1105.12 361.03 L1105.20 360.24 L1105.27 359.45 L1105.33 358.67 L1105.37 357.89 L1105.39 357.13 L1105.40 356.37 L1105.39 355.62 L1105.37 354.88 L1105.34 354.14 L1105.29 353.41 L1105.22 352.69 L1105.14 351.98 L1105.04 351.27 L1104.93 350.58 L1104.80 349.89 L1104.66 349.20 L1104.50 348.52 L1104.32 347.85 L1104.13 347.19 L1103.93 346.53 L1103.70 345.88 L1103.47 345.24 L1103.21 344.61Z" fill="none" stroke="#ff3434" stroke-width="1.5"/><circle cx="831.8" cy="457" r="2.3" fill="#c840c8"/><circle cx="831.8" cy="456.6" r="0.7" fill="#e8d0e8"/><circle cx="831.5" cy="729.1" r="1.6" fill="none" stroke="#6ab06a" stroke-width="0.8"/><g font-family="Liberation Sans" font-size="11.5" fill="#2e9e2e"><text x="833.2" y="469.7">A3</text><text x="721.5" y="742">A</text><text x="832.5" y="742">A2</text><text x="944" y="742">A1</text></g><g stroke="#ff00ff" stroke-width="1.5" fill="none"><path d="M710.4 720.4H734.8M728 716l6.8 4.4L728 724.8"/><path d="M714.3 716V741M709.9 734.2l4.4 6.8 4.4-6.8"/><path d="M735.5 715.5l6.5 9.5M742 715.5l-6.5 9.5"/><path d="M710.7 742l3.2 5 3.2-5M713.9 747v5.5"/></g></svg>
<div style="position:absolute;left:1577px;top:182px;width:9px;height:844px;background:linear-gradient(90deg,#f0f0f0,#fbfbfb);border-left:1px solid #d4d4d4;box-sizing:border-box"></div>
<div style="position:absolute;left:1577px;top:195.5px;width:9px;height:1px;background:#d0d0d0"></div>
<div style="position:absolute;left:1578px;top:1003.5px;width:8px;height:11px;background:#dedede;border-top:1px solid #cfcfcf;box-sizing:border-box"></div>
<div style="position:absolute;left:106px;top:1026px;width:1480px;height:8.5px;background:linear-gradient(#f0f0f0,#fbfbfb);border-top:1px solid #d4d4d4;box-sizing:border-box"></div>
<div style="position:absolute;left:118.3px;top:1027px;width:10.5px;height:7.5px;background:#dedede;border-left:1px solid #cfcfcf;border-right:1px solid #cfcfcf;box-sizing:border-box"></div>
<div style="position:absolute;left:1564px;top:1026px;width:1px;height:8.5px;background:#cfcfcf"></div>
<svg style="position:absolute;left:1576px;top:185px;overflow:visible" width="12" height="848" viewBox="0 0 12 848"><path d="M2.5 9l3.5-3 3.5 3z" fill="#555"/><path d="M2.5 832l3.5 3 3.5-3z" fill="#555"/></svg>
<svg style="position:absolute;left:106px;top:1026px;overflow:visible" width="1470" height="9" viewBox="0 0 1470 9"><path d="M8 4.2l3-3v6z" fill="#555"/><path d="M1464 1.2l3 3-3 3z" fill="#555"/></svg>
<div style="position:absolute;left:1598.00px;top:180.12px;font-size:12.5px;line-height:12.5px;color:#1c1c1c;font-weight:normal;letter-spacing:0.507px;white-space:nowrap;">Property Ediitor</div>
<svg style="position:absolute;left:1849.5px;top:181px;overflow:visible" width="22" height="11" viewBox="0 0 22 11"><rect x="0.5" y="0.5" width="9" height="9" rx="2" fill="#e4e4e4" stroke="#9a9a9a" stroke-width="0.8"/><rect x="3" y="4" width="4" height="4" fill="none" stroke="#777" stroke-width="0.9"/><path d="M4 4V2.5h3.5V6" fill="none" stroke="#777" stroke-width="0.9"/><rect x="11.5" y="0.5" width="9" height="9" rx="2" fill="#d6d6d6" stroke="#9a9a9a" stroke-width="0.8"/><path d="M14 2.5l4.5 4.5M18.5 2.5l-4.5 4.5" stroke="#555" stroke-width="1.3"/></svg>
<div style="position:absolute;left:1595px;top:194px;width:277px;height:458px;background:#efefef;border:1px solid #cdcdcd;border-right:none;box-sizing:border-box"></div>
<div style="position:absolute;left:1596.60px;top:195.15px;font-size:14px;line-height:14px;color:#1c1c1c;font-weight:normal;letter-spacing:-0.102px;white-space:nowrap;">Arc with given length</div>
<div style="position:absolute;left:1597px;top:213px;width:275px;height:438px;background:#eaeaea;border-top:1px solid #d6d6d6;border-left:1px solid #d6d6d6;box-sizing:border-box"></div>
<div style="position:absolute;left:1607.38px;top:228.15px;font-size:14px;line-height:14px;color:#1c1c1c;font-weight:normal;letter-spacing:-0.079px;white-space:nowrap;">Center point:</div>
<div style="position:absolute;left:1692.30px;top:250.12px;font-size:12.5px;line-height:12.5px;color:#1c1c1c;font-weight:normal;letter-spacing:0.050px;white-space:nowrap;">A3</div>
<div style="position:absolute;left:1691.5px;top:294.5px;width:152px;height:22px;background:#eeeeee"></div>
<div style="position:absolute;left:1607.12px;top:297.85px;font-size:14px;line-height:14px;color:#1c1c1c;font-weight:bold;letter-spacing:-0.104px;white-space:nowrap;">Radius:</div>
<div style="position:absolute;left:1691.67px;top:297.85px;font-size:14px;line-height:14px;color:#1c1c1c;font-weight:normal;letter-spacing:-0.115px;white-space:nowrap;">-14.5625 inch</div>
<div style="position:absolute;left:1844.2px;top:295.0px;width:15.5px;height:21.5px;background:linear-gradient(#fbfbfb,#f0f0f0);border:1px solid #c4c4c4;border-radius:2px;box-sizing:border-box"></div>
<svg style="position:absolute;left:1845px;top:298.5px;overflow:visible" width="14" height="14" viewBox="0 0 14 14"><text x="1" y="11.5" font-family="Liberation Serif" font-style="italic" font-weight="bold" font-size="13" fill="#222">f</text><text x="6" y="10.5" font-family="Liberation Sans" font-size="7" fill="#888">(x)</text></svg>
<div style="position:absolute;left:1618.08px;top:327.15px;font-size:14px;line-height:14px;color:#2a2a2a;font-weight:normal;letter-spacing:-0.268px;white-space:nowrap;">Formula:</div>
<div style="position:absolute;left:1677.5px;top:322.5px;width:173px;height:56.80000000000001px;background:#fff;border:1px solid #c0c0c0;border-radius:2px;box-sizing:border-box"></div>
<div style="position:absolute;left:1680.00px;top:342.65px;font-size:14px;line-height:14px;color:#111;font-weight:normal;letter-spacing:0.042px;white-space:nowrap;">#arc</div>
<svg style="position:absolute;left:1829px;top:342.5px;overflow:visible" width="16" height="17" viewBox="0 0 16 17"><path d="M9 8l4-6" stroke="#b06a20" stroke-width="2.4" stroke-linecap="round"/><path d="M6 7l5 3c0 4-2 6-6 6-2 0-5-1-5-1 2-1 3-5 6-8z" fill="#f2dc3a" stroke="#d4b010" stroke-width="0.6"/><path d="M6.5 7.5l4 2.5" stroke="#d8d0a0" stroke-width="1"/></svg>
<div style="position:absolute;left:1691.5px;top:394.5px;width:152px;height:22px;background:#eeeeee"></div>
<div style="position:absolute;left:1607.12px;top:397.05px;font-size:14px;line-height:14px;color:#1c1c1c;font-weight:bold;letter-spacing:0.241px;white-space:nowrap;">First angle:</div>
<div style="position:absolute;left:1691.67px;top:397.05px;font-size:14px;line-height:14px;color:#1c1c1c;font-weight:normal;letter-spacing:-0.025px;white-space:nowrap;">292.19 °</div>
<div style="position:absolute;left:1844.2px;top:395.0px;width:15.5px;height:21.5px;background:linear-gradient(#fbfbfb,#f0f0f0);border:1px solid #c4c4c4;border-radius:2px;box-sizing:border-box"></div>
<svg style="position:absolute;left:1845px;top:398.5px;overflow:visible" width="14" height="14" viewBox="0 0 14 14"><text x="1" y="11.5" font-family="Liberation Serif" font-style="italic" font-weight="bold" font-size="13" fill="#222">f</text><text x="6" y="10.5" font-family="Liberation Sans" font-size="7" fill="#888">(x)</text></svg>
<div style="position:absolute;left:1618.08px;top:426.75px;font-size:14px;line-height:14px;color:#2a2a2a;font-weight:normal;letter-spacing:-0.268px;white-space:nowrap;">Formula:</div>
<div style="position:absolute;left:1677.5px;top:422.1px;width:173px;height:55.599999999999966px;background:#fff;border:1px solid #c0c0c0;border-radius:2px;box-sizing:border-box"></div>
<div style="position:absolute;left:1680.00px;top:442.32px;font-size:13.5px;line-height:13.5px;color:#111;font-weight:normal;letter-spacing:-0.450px;white-space:nowrap;">AngleLine_A3_A1</div>
<svg style="position:absolute;left:1829px;top:442.1px;overflow:visible" width="16" height="17" viewBox="0 0 16 17"><path d="M9 8l4-6" stroke="#b06a20" stroke-width="2.4" stroke-linecap="round"/><path d="M6 7l5 3c0 4-2 6-6 6-2 0-5-1-5-1 2-1 3-5 6-8z" fill="#f2dc3a" stroke="#d4b010" stroke-width="0.6"/><path d="M6.5 7.5l4 2.5" stroke="#d8d0a0" stroke-width="1"/></svg>
<div style="position:absolute;left:1691.5px;top:493.8px;width:152px;height:22px;background:#eeeeee"></div>
<div style="position:absolute;left:1607.12px;top:494.65px;font-size:14px;line-height:14px;color:#1c1c1c;font-weight:bold;letter-spacing:0.129px;white-space:nowrap;">Length:</div>
<div style="position:absolute;left:1691.30px;top:494.65px;font-size:14px;line-height:14px;color:#1c1c1c;font-weight:normal;letter-spacing:-0.072px;white-space:nowrap;">13.75 inch</div>
<div style="position:absolute;left:1844.2px;top:494.3px;width:15.5px;height:21.5px;background:linear-gradient(#fbfbfb,#f0f0f0);border:1px solid #c4c4c4;border-radius:2px;box-sizing:border-box"></div>
<svg style="position:absolute;left:1845px;top:497.8px;overflow:visible" width="14" height="14" viewBox="0 0 14 14"><text x="1" y="11.5" font-family="Liberation Serif" font-style="italic" font-weight="bold" font-size="13" fill="#222">f</text><text x="6" y="10.5" font-family="Liberation Sans" font-size="7" fill="#888">(x)</text></svg>
<div style="position:absolute;left:1618.08px;top:525.35px;font-size:14px;line-height:14px;color:#2a2a2a;font-weight:normal;letter-spacing:-0.268px;white-space:nowrap;">Formula:</div>
<div style="position:absolute;left:1677.5px;top:520.7px;width:173px;height:56.299999999999955px;background:#fff;border:1px solid #c0c0c0;border-radius:2px;box-sizing:border-box"></div>
<div style="position:absolute;left:1679.00px;top:540.75px;font-size:14px;line-height:14px;color:#111;font-weight:normal;letter-spacing:-0.225px;white-space:nowrap;">13.75</div>
<svg style="position:absolute;left:1829px;top:540.7px;overflow:visible" width="16" height="17" viewBox="0 0 16 17"><path d="M9 8l4-6" stroke="#b06a20" stroke-width="2.4" stroke-linecap="round"/><path d="M6 7l5 3c0 4-2 6-6 6-2 0-5-1-5-1 2-1 3-5 6-8z" fill="#f2dc3a" stroke="#d4b010" stroke-width="0.6"/><path d="M6.5 7.5l4 2.5" stroke="#d8d0a0" stroke-width="1"/></svg>
<div style="position:absolute;left:1606.47px;top:594.15px;font-size:14px;line-height:14px;color:#1c1c1c;font-weight:normal;letter-spacing:-0.025px;white-space:nowrap;">Linetype:</div>
<div style="position:absolute;left:1692.3px;top:592.6px;width:87px;height:19.6px;background:linear-gradient(#fbfbfb,#f0f0f0);border:1px solid #c4c4c4;border-radius:3px;box-sizing:border-box"></div>
<div style="position:absolute;left:1696.8px;top:596.3px;width:63px;height:11px;background:#fff"></div>
<div style="position:absolute;left:1698px;top:601.2px;width:62px;height:2px;background:#111"></div>
<svg style="position:absolute;left:1763px;top:599.5px;overflow:visible" width="10" height="6" viewBox="0 0 10 6"><path d="M0 0h10l-5 5z" fill="#555"/></svg>
<div style="position:absolute;left:1606.97px;top:621.55px;font-size:14px;line-height:14px;color:#1c1c1c;font-weight:normal;letter-spacing:-0.300px;white-space:nowrap;">Color:</div>
<div style="position:absolute;left:1692.3px;top:618.5px;width:167.2px;height:21.8px;background:linear-gradient(#fbfbfb,#f0f0f0);border:1px solid #c4c4c4;border-radius:3px;box-sizing:border-box"></div>
<div style="position:absolute;left:1696.8px;top:622px;width:16.2px;height:15.4px;background:#000"></div>
<div style="position:absolute;left:1714.58px;top:621.97px;font-size:13.5px;line-height:13.5px;color:#1c1c1c;font-weight:normal;letter-spacing:-0.169px;white-space:nowrap;">Black</div>
<svg style="position:absolute;left:1843px;top:626.5px;overflow:visible" width="10" height="6" viewBox="0 0 10 6"><path d="M0 0h10l-5 5z" fill="#555"/></svg>
<div style="position:absolute;left:1728px;top:658px;width:6px;height:1px;background-image:radial-gradient(#cdcdcd 0.75px,transparent 0.9px);background-size:3px 3px"></div>
<div style="position:absolute;left:1598.08px;top:659.42px;font-size:12.5px;line-height:12.5px;color:#1c1c1c;font-weight:normal;letter-spacing:0.446px;white-space:nowrap;">Group Manager</div>
<svg style="position:absolute;left:1850px;top:661px;overflow:visible" width="22" height="11" viewBox="0 0 22 11"><rect x="0.5" y="0.5" width="9" height="9" rx="2" fill="#e4e4e4" stroke="#9a9a9a" stroke-width="0.8"/><rect x="3" y="4" width="4" height="4" fill="none" stroke="#777" stroke-width="0.9"/><path d="M4 4V2.5h3.5V6" fill="none" stroke="#777" stroke-width="0.9"/><rect x="11.5" y="0.5" width="9" height="9" rx="2" fill="#d6d6d6" stroke="#9a9a9a" stroke-width="0.8"/><path d="M14 2.5l4.5 4.5M18.5 2.5l-4.5 4.5" stroke="#555" stroke-width="1.3"/></svg>
<div style="position:absolute;left:1604.4px;top:683.3px;width:258.2px;height:346px;background:#fff;border:1px solid #c0c0c0;box-sizing:border-box"></div>
<div style="position:absolute;left:0px;top:1037px;width:1872px;height:23.5px;background:linear-gradient(#f7f7f7,#f0f0f0)"></div>
<div style="position:absolute;left:0px;top:1060px;width:1872px;height:1px;background:#cbcbcb"></div>
<div style="position:absolute;left:0px;top:1061px;width:1872px;height:19px;background:#ededed"></div>
<div style="position:absolute;left:11.62px;top:1042.15px;font-size:14px;line-height:14px;color:#1c1c1c;font-weight:normal;letter-spacing:0.400px;white-space:nowrap;">XPos: 17.87, YPos: 0.79 (inch)</div>
<div style="position:absolute;left:4px;top:1043px;width:6px;height:12px;background-image:radial-gradient(#c0c0c0 0.75px,transparent 0.9px);background-size:3px 3px"></div>
<svg style="position:absolute;left:0px;top:0px;overflow:visible" width="1920" height="1080" viewBox="0 0 1920 1080"><circle cx="1895.6" cy="24" r="18" fill="#3b3b3b"/><circle cx="1895.6" cy="24" r="6.3" fill="none" stroke="#fff" stroke-width="2.2"/><path d="M1895.6 372L1909.80 363.80A16.4 16.4 0 0 0 1881.40 363.80Z" fill="#db4437"/><path d="M1895.6 372L1881.40 363.80A16.4 16.4 0 0 0 1895.60 388.40Z" fill="#0f9d58"/><path d="M1895.6 372L1895.60 388.40A16.4 16.4 0 0 0 1909.80 363.80Z" fill="#f4c20d"/><circle cx="1895.6" cy="372" r="7.6" fill="#fff"/><circle cx="1895.6" cy="372" r="5.9" fill="#4285f4"/><circle cx="1896" cy="427.8" r="17" fill="#5b5e62"/><path d="M1887 421l6 5-6 5" fill="none" stroke="#78e0b0" stroke-width="2"/><path d="M1896 433h8" stroke="#fff" stroke-width="2"/><circle cx="1896" cy="483.3" r="17" fill="#1e88e5"/><path d="M1886 476h9v15h-9z M1897 476h9v15h-9z" fill="#fff"/><path d="M1889 474l3-3M1903 474l-3-3" stroke="#fff" stroke-width="1.2"/><path d="M1891 480h3M1898 480h3M1892.5 479v7" stroke="#1e88e5" stroke-width="1"/><circle cx="1896" cy="540" r="17" fill="#1b6e5e"/><rect x="1886" y="531" width="4" height="17" fill="#e25d4b"/><rect x="1891" y="528" width="5" height="20" fill="#5b8fe0"/><rect x="1897" y="530" width="4" height="18" fill="#3aa8a0"/><path d="M1902 531l3-1 4 17-3 1z" fill="#f0c070"/><circle cx="1896" cy="595.6" r="17" fill="#5b5e62"/><text x="1896" y="601.5" text-anchor="middle" font-family="Liberation Sans" font-size="17" fill="#eee">&lt;<tspan fill="#78e0b0">t</tspan>&gt;</text><circle cx="1896" cy="651" r="17" fill="#fafafa"/><rect x="1889" y="646" width="13" height="9" fill="#f0f0f0" stroke="#ccc" stroke-width="0.5"/><path d="M1890 648h6" stroke="#c44" stroke-width="1"/><path d="M1886 680h20" stroke="#444" stroke-width="1"/><circle cx="1896" cy="708.5" r="17" fill="#5b5e62"/><path d="M1883 719c2-10 5-17 13-17s11 7 13 17c-4 4-9 5.5-13 5.5s-9-1.5-13-5.5z" fill="#fff"/><path d="M1883.5 720c4 3 8 4.5 12.5 4.5s8.5-1.5 12.5-4.5c-1 2-5 4.8-12.5 4.8s-11.5-2.8-12.5-4.8z" fill="#bbb"/><circle cx="1892" cy="707" r="1.1" fill="#333"/><circle cx="1900" cy="707" r="1.1" fill="#333"/><circle cx="1896" cy="709.5" r="1.6" fill="#3ee0a0"/><rect x="1916" y="367.5" width="2" height="8" rx="1" fill="#eee"/><rect x="1916" y="423.8" width="2" height="8" rx="1" fill="#eee"/><rect x="1916" y="591.6" width="2" height="8" rx="1" fill="#eee"/><rect x="1916" y="704.5" width="2" height="8" rx="1" fill="#eee"/><rect x="1878" y="887.5" width="35.5" height="185.5" rx="17.5" fill="#3b3b3b"/><circle cx="1896" cy="907.8" r="6.5" fill="#eee"/><path d="M1896 904l-4 4h2.5v3h3v-3h2.5z" fill="#3b3b3b"/><path d="M1884 929h24" stroke="#555" stroke-width="1"/><text x="1895.5" y="959" text-anchor="middle" font-family="Liberation Sans" font-size="13" fill="#eee">PL</text><path d="M1888 975a12 12 0 0 1 16 0l-8 9z" fill="#eee"/><rect x="1892.5" y="997" width="7" height="13" rx="1" fill="#eee"/><rect x="1894.5" y="995.5" width="3" height="2" fill="#eee"/><text x="1896" y="1040.5" text-anchor="middle" font-family="Liberation Sans" font-size="13.5" fill="#eee">06</text><text x="1896" y="1058.5" text-anchor="middle" font-family="Liberation Sans" font-size="13.5" fill="#eee">17</text></svg>
</body></html>
